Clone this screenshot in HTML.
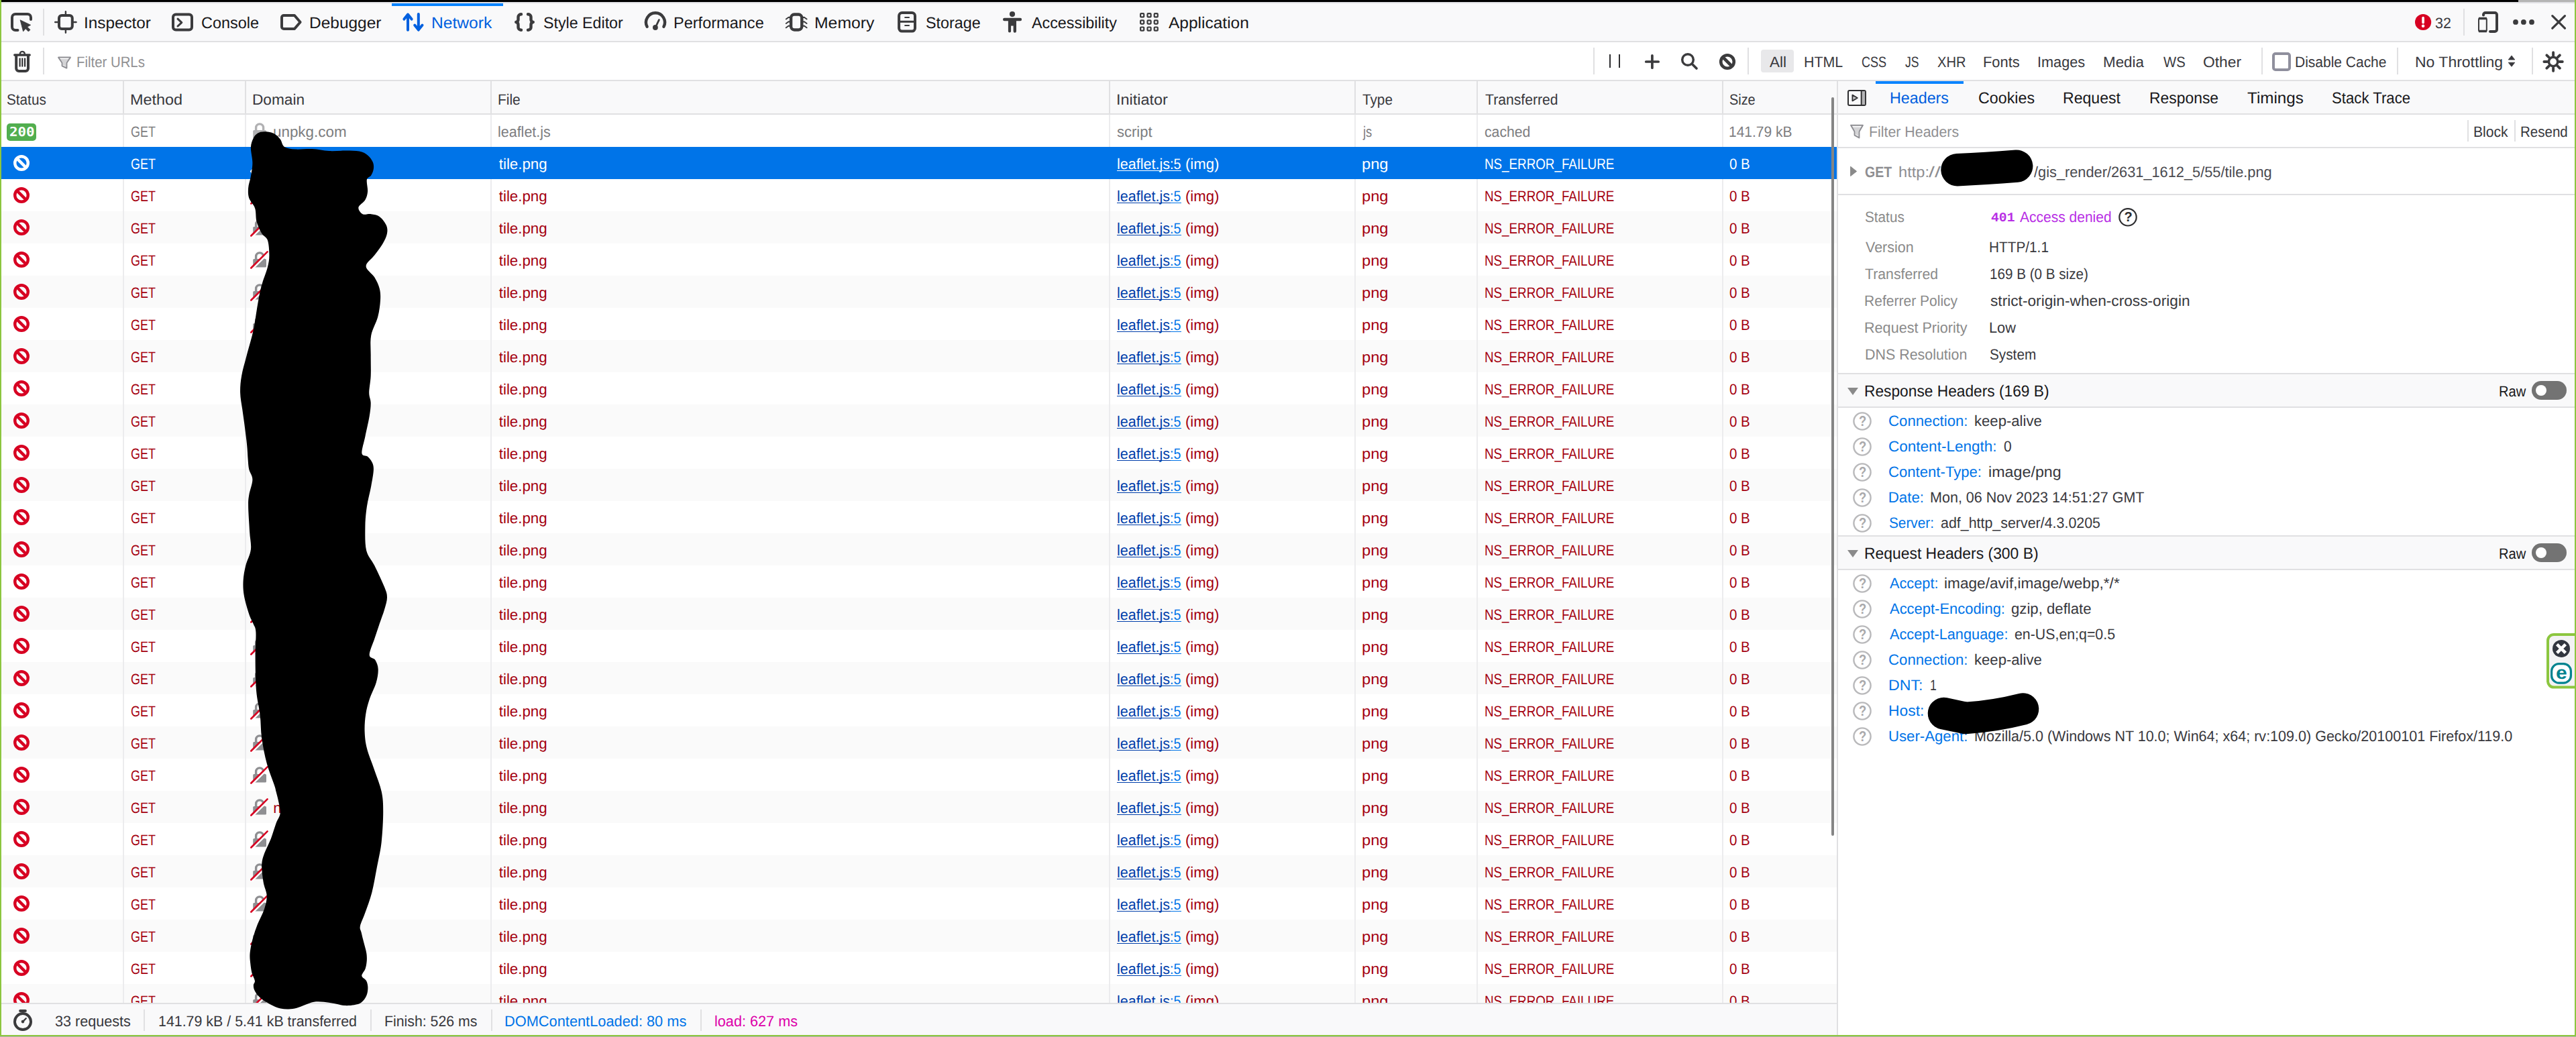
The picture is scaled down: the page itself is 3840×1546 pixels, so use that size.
<!DOCTYPE html>
<html lang="en"><head><meta charset="utf-8"><title>Network</title>
<style>
html,body{margin:0;padding:0}
body{width:3840px;height:1546px;position:relative;overflow:hidden;background:#fff;font-family:"Liberation Sans", sans-serif;}
.b{position:absolute;display:block}
.t{position:absolute;white-space:pre;line-height:1;transform-origin:0 0;text-rendering:geometricPrecision;}

</style></head><body>
<div class="b" style="left:0px;top:0px;width:3754px;height:3px;background:#000;"></div>
<div class="b" style="left:3754px;top:0px;width:86px;height:3px;background:#b4b4b4;"></div>
<div class="b" style="left:0px;top:3px;width:3840px;height:2px;background:#e1e1e5;"></div>
<div class="b" style="left:0px;top:5px;width:3840px;height:56px;background:#f9f9fa;"></div>
<div class="b" style="left:0px;top:61px;width:3840px;height:2px;background:#e0e0e2;"></div>
<div class="b" style="left:0px;top:63px;width:3840px;height:56px;background:#fff;"></div>
<div class="b" style="left:0px;top:119px;width:3840px;height:2px;background:#e0e0e2;"></div>
<div class="b" style="left:0px;top:121px;width:2738px;height:48px;background:#f9f9fa;"></div>
<div class="b" style="left:0px;top:169px;width:2738px;height:2px;background:#e0e0e2;"></div>
<div class="b" style="left:0px;top:171px;width:2738px;height:48px;background:#fff;"></div>
<div class="b" style="left:0px;top:219px;width:2738px;height:48px;background:#0074e8;"></div>
<div class="b" style="left:0px;top:267px;width:2738px;height:48px;background:#fff;"></div>
<div class="b" style="left:0px;top:315px;width:2738px;height:48px;background:#fafafa;"></div>
<div class="b" style="left:0px;top:363px;width:2738px;height:48px;background:#fff;"></div>
<div class="b" style="left:0px;top:411px;width:2738px;height:48px;background:#fafafa;"></div>
<div class="b" style="left:0px;top:459px;width:2738px;height:48px;background:#fff;"></div>
<div class="b" style="left:0px;top:507px;width:2738px;height:48px;background:#fafafa;"></div>
<div class="b" style="left:0px;top:555px;width:2738px;height:48px;background:#fff;"></div>
<div class="b" style="left:0px;top:603px;width:2738px;height:48px;background:#fafafa;"></div>
<div class="b" style="left:0px;top:651px;width:2738px;height:48px;background:#fff;"></div>
<div class="b" style="left:0px;top:699px;width:2738px;height:48px;background:#fafafa;"></div>
<div class="b" style="left:0px;top:747px;width:2738px;height:48px;background:#fff;"></div>
<div class="b" style="left:0px;top:795px;width:2738px;height:48px;background:#fafafa;"></div>
<div class="b" style="left:0px;top:843px;width:2738px;height:48px;background:#fff;"></div>
<div class="b" style="left:0px;top:891px;width:2738px;height:48px;background:#fafafa;"></div>
<div class="b" style="left:0px;top:939px;width:2738px;height:48px;background:#fff;"></div>
<div class="b" style="left:0px;top:987px;width:2738px;height:48px;background:#fafafa;"></div>
<div class="b" style="left:0px;top:1035px;width:2738px;height:48px;background:#fff;"></div>
<div class="b" style="left:0px;top:1083px;width:2738px;height:48px;background:#fafafa;"></div>
<div class="b" style="left:0px;top:1131px;width:2738px;height:48px;background:#fff;"></div>
<div class="b" style="left:0px;top:1179px;width:2738px;height:48px;background:#fafafa;"></div>
<div class="b" style="left:0px;top:1227px;width:2738px;height:48px;background:#fff;"></div>
<div class="b" style="left:0px;top:1275px;width:2738px;height:48px;background:#fafafa;"></div>
<div class="b" style="left:0px;top:1323px;width:2738px;height:48px;background:#fff;"></div>
<div class="b" style="left:0px;top:1371px;width:2738px;height:48px;background:#fafafa;"></div>
<div class="b" style="left:0px;top:1419px;width:2738px;height:48px;background:#fff;"></div>
<div class="b" style="left:0px;top:1467px;width:2738px;height:48px;background:#fafafa;"></div>
<div class="b" style="left:183px;top:121px;width:2px;height:48px;background:#e0e0e2;"></div>
<div class="b" style="left:183px;top:171px;width:2px;height:48px;background:#ececee;"></div>
<div class="b" style="left:183px;top:267px;width:2px;height:1230px;background:#ececee;"></div>
<div class="b" style="left:365px;top:121px;width:2px;height:48px;background:#e0e0e2;"></div>
<div class="b" style="left:365px;top:171px;width:2px;height:48px;background:#ececee;"></div>
<div class="b" style="left:365px;top:267px;width:2px;height:1230px;background:#ececee;"></div>
<div class="b" style="left:731px;top:121px;width:2px;height:48px;background:#e0e0e2;"></div>
<div class="b" style="left:731px;top:171px;width:2px;height:48px;background:#ececee;"></div>
<div class="b" style="left:731px;top:267px;width:2px;height:1230px;background:#ececee;"></div>
<div class="b" style="left:1653px;top:121px;width:2px;height:48px;background:#e0e0e2;"></div>
<div class="b" style="left:1653px;top:171px;width:2px;height:48px;background:#ececee;"></div>
<div class="b" style="left:1653px;top:267px;width:2px;height:1230px;background:#ececee;"></div>
<div class="b" style="left:2019px;top:121px;width:2px;height:48px;background:#e0e0e2;"></div>
<div class="b" style="left:2019px;top:171px;width:2px;height:48px;background:#ececee;"></div>
<div class="b" style="left:2019px;top:267px;width:2px;height:1230px;background:#ececee;"></div>
<div class="b" style="left:2201px;top:121px;width:2px;height:48px;background:#e0e0e2;"></div>
<div class="b" style="left:2201px;top:171px;width:2px;height:48px;background:#ececee;"></div>
<div class="b" style="left:2201px;top:267px;width:2px;height:1230px;background:#ececee;"></div>
<div class="b" style="left:2567px;top:121px;width:2px;height:48px;background:#e0e0e2;"></div>
<div class="b" style="left:2567px;top:171px;width:2px;height:48px;background:#ececee;"></div>
<div class="b" style="left:2567px;top:267px;width:2px;height:1230px;background:#ececee;"></div>
<span class="t" style="left:125.10px;top:23.50px;font-size:23.7px;color:#18181a;transform:scaleX(1.0260);">Inspector</span>
<span class="t" style="left:299.90px;top:23.50px;font-size:23.7px;color:#18181a;transform:scaleX(0.9896);">Console</span>
<span class="t" style="left:460.59px;top:23.50px;font-size:23.7px;color:#18181a;transform:scaleX(1.0330);">Debugger</span>
<span class="t" style="left:643.08px;top:23.50px;font-size:23.7px;color:#0060df;transform:scaleX(1.0388);">Network</span>
<span class="t" style="left:810.27px;top:23.50px;font-size:23.7px;color:#18181a;transform:scaleX(0.9806);">Style Editor</span>
<span class="t" style="left:1004.16px;top:23.50px;font-size:23.7px;color:#18181a;transform:scaleX(0.9935);">Performance</span>
<span class="t" style="left:1213.57px;top:23.50px;font-size:23.7px;color:#18181a;transform:scaleX(1.0449);">Memory</span>
<span class="t" style="left:1379.77px;top:23.50px;font-size:23.7px;color:#18181a;transform:scaleX(0.9839);">Storage</span>
<span class="t" style="left:1537.50px;top:23.50px;font-size:23.7px;color:#18181a;transform:scaleX(0.9840);">Accessibility</span>
<span class="t" style="left:1742.00px;top:23.50px;font-size:23.7px;color:#18181a;transform:scaleX(1.0339);">Application</span>
<div class="b" style="left:584px;top:5px;width:166px;height:4px;background:#0a84ff;"></div>
<div class="b" style="left:64px;top:13px;width:2px;height:40px;background:#e0e0e2;"></div>
<span class="t" style="left:3630.33px;top:23.70px;font-size:22.3px;color:#38383d;transform:scaleX(0.9589);">32</span>
<div class="b" style="left:3672px;top:13px;width:2px;height:40px;background:#e0e0e2;"></div>
<div class="b" style="left:64px;top:71px;width:2px;height:40px;background:#e0e0e2;"></div>
<span class="t" style="left:114.01px;top:81.70px;font-size:22.3px;color:#909092;transform:scaleX(0.9136);">Filter URLs</span>
<div class="b" style="left:2375px;top:71px;width:2px;height:40px;background:#e0e0e2;"></div>
<div class="b" style="left:2605px;top:71px;width:2px;height:40px;background:#e0e0e2;"></div>
<div class="b" style="left:2625px;top:74px;width:49px;height:34px;background:#e8e8ea;border-radius:4px"></div>
<span class="t" style="left:2637.50px;top:81.70px;font-size:22.3px;color:#38383d;transform:scaleX(1.0080);">All</span>
<span class="t" style="left:2689.33px;top:81.70px;font-size:22.3px;color:#38383d;transform:scaleX(0.9588);">HTML</span>
<span class="t" style="left:2774.65px;top:81.70px;font-size:22.3px;color:#38383d;transform:scaleX(0.8092);">CSS</span>
<span class="t" style="left:2839.73px;top:81.70px;font-size:22.3px;color:#38383d;transform:scaleX(0.7882);">JS</span>
<span class="t" style="left:2887.69px;top:81.70px;font-size:22.3px;color:#38383d;transform:scaleX(0.9029);">XHR</span>
<span class="t" style="left:2955.99px;top:81.70px;font-size:22.3px;color:#38383d;transform:scaleX(0.9806);">Fonts</span>
<span class="t" style="left:3037.30px;top:81.70px;font-size:22.3px;color:#38383d;transform:scaleX(0.9733);">Images</span>
<span class="t" style="left:3134.95px;top:81.70px;font-size:22.3px;color:#38383d;transform:scaleX(1.0028);">Media</span>
<span class="t" style="left:3224.80px;top:81.70px;font-size:22.3px;color:#38383d;transform:scaleX(0.9090);">WS</span>
<span class="t" style="left:3284.43px;top:81.70px;font-size:22.3px;color:#38383d;transform:scaleX(1.0216);">Other</span>
<div class="b" style="left:3371px;top:71px;width:2px;height:40px;background:#e0e0e2;"></div>
<span class="t" style="left:3420.61px;top:81.70px;font-size:22.3px;color:#38383d;transform:scaleX(0.9411);">Disable Cache</span>
<div class="b" style="left:3573px;top:71px;width:2px;height:40px;background:#e0e0e2;"></div>
<span class="t" style="left:3600.20px;top:81.70px;font-size:22.3px;color:#38383d;transform:scaleX(1.0308);">No Throttling</span>
<div class="b" style="left:3774px;top:71px;width:2px;height:40px;background:#e0e0e2;"></div>
<span class="t" style="left:9.85px;top:137.70px;font-size:22.3px;color:#38383d;transform:scaleX(0.9300);">Status</span>
<span class="t" style="left:193.67px;top:137.70px;font-size:22.3px;color:#38383d;transform:scaleX(1.0506);">Method</span>
<span class="t" style="left:376.23px;top:137.70px;font-size:22.3px;color:#38383d;transform:scaleX(1.0156);">Domain</span>
<span class="t" style="left:742.11px;top:137.70px;font-size:22.3px;color:#38383d;transform:scaleX(0.9388);">File</span>
<span class="t" style="left:1663.92px;top:137.70px;font-size:22.3px;color:#38383d;transform:scaleX(1.0522);">Initiator</span>
<span class="t" style="left:2030.93px;top:137.70px;font-size:22.3px;color:#38383d;transform:scaleX(0.9290);">Type</span>
<span class="t" style="left:2213.67px;top:137.70px;font-size:22.3px;color:#38383d;transform:scaleX(0.9483);">Transferred</span>
<span class="t" style="left:2578.13px;top:137.70px;font-size:22.3px;color:#38383d;transform:scaleX(0.8916);">Size</span>
<div class="b" style="left:10px;top:184px;width:44px;height:26px;background:#51ae4f;border-radius:5px"></div>
<span class="t" style="left:13.77px;top:187.85px;font-size:19px;color:#fff;transform:scaleX(1.0964);font-weight:700;font-family:'DejaVu Sans Mono',monospace;">200</span>
<span class="t" style="left:194.66px;top:185.70px;font-size:22.3px;color:#7d7d7f;transform:scaleX(0.8049);">GET</span>
<span class="t" style="left:406.60px;top:185.70px;font-size:22.3px;color:#7d7d7f;transform:scaleX(1.0044);">unpkg.com</span>
<span class="t" style="left:742.41px;top:185.70px;font-size:22.3px;color:#7d7d7f;transform:scaleX(0.9628);">leaflet.js</span>
<span class="t" style="left:1665.41px;top:185.70px;font-size:22.3px;color:#7d7d7f;transform:scaleX(0.9857);">script</span>
<span class="t" style="left:2031.82px;top:185.70px;font-size:22.3px;color:#7d7d7f;transform:scaleX(0.8228);">js</span>
<span class="t" style="left:2213.34px;top:185.70px;font-size:22.3px;color:#7d7d7f;transform:scaleX(0.9505);">cached</span>
<span class="t" style="left:2577.44px;top:185.70px;font-size:22.3px;color:#7d7d7f;transform:scaleX(0.9404);">141.79 kB</span>
<span class="t" style="left:194.66px;top:233.70px;font-size:22.3px;color:#fff;transform:scaleX(0.8049);">GET</span>
<span class="t" style="left:743.75px;top:233.70px;font-size:22.3px;color:#fff;">tile.png</span>
<span class="t" style="left:1665.35px;top:233.70px;font-size:22.3px;color:#fff;transform:scaleX(0.9659);">leaflet.js</span>
<span class="t" style="left:1743.97px;top:233.70px;font-size:22.3px;color:#fff;transform:scaleX(0.8776);">:5</span>
<div class="b" style="left:1665px;top:254px;width:79.5px;height:1.4px;background:#fff;"></div>
<div class="b" style="left:1744.5px;top:254px;width:16.5px;height:1.4px;background:#fff;"></div>
<span class="t" style="left:1767.16px;top:233.70px;font-size:22.3px;color:#fff;transform:scaleX(0.9921);">(img)</span>
<span class="t" style="left:2029.77px;top:233.70px;font-size:22.3px;color:#fff;transform:scaleX(1.0633);">png</span>
<span class="t" style="left:2212.53px;top:233.70px;font-size:22.3px;color:#fff;transform:scaleX(0.8430);">NS_ERROR_FAILURE</span>
<span class="t" style="left:2578.11px;top:233.70px;font-size:22.3px;color:#fff;transform:scaleX(0.9187);">0 B</span>
<span class="t" style="left:194.66px;top:281.70px;font-size:22.3px;color:#a4000f;transform:scaleX(0.8049);">GET</span>
<span class="t" style="left:743.75px;top:281.70px;font-size:22.3px;color:#a4000f;">tile.png</span>
<span class="t" style="left:1665.35px;top:281.70px;font-size:22.3px;color:#003eaa;transform:scaleX(0.9659);">leaflet.js</span>
<span class="t" style="left:1743.97px;top:281.70px;font-size:22.3px;color:#0074e8;transform:scaleX(0.8776);">:5</span>
<div class="b" style="left:1665px;top:302px;width:79.5px;height:1.4px;background:#003eaa;"></div>
<div class="b" style="left:1744.5px;top:302px;width:16.5px;height:1.4px;background:#0074e8;"></div>
<span class="t" style="left:1767.16px;top:281.70px;font-size:22.3px;color:#a4000f;transform:scaleX(0.9921);">(img)</span>
<span class="t" style="left:2029.77px;top:281.70px;font-size:22.3px;color:#a4000f;transform:scaleX(1.0633);">png</span>
<span class="t" style="left:2212.53px;top:281.70px;font-size:22.3px;color:#a4000f;transform:scaleX(0.8430);">NS_ERROR_FAILURE</span>
<span class="t" style="left:2578.11px;top:281.70px;font-size:22.3px;color:#a4000f;transform:scaleX(0.9187);">0 B</span>
<span class="t" style="left:194.66px;top:329.70px;font-size:22.3px;color:#a4000f;transform:scaleX(0.8049);">GET</span>
<span class="t" style="left:743.75px;top:329.70px;font-size:22.3px;color:#a4000f;">tile.png</span>
<span class="t" style="left:1665.35px;top:329.70px;font-size:22.3px;color:#003eaa;transform:scaleX(0.9659);">leaflet.js</span>
<span class="t" style="left:1743.97px;top:329.70px;font-size:22.3px;color:#0074e8;transform:scaleX(0.8776);">:5</span>
<div class="b" style="left:1665px;top:350px;width:79.5px;height:1.4px;background:#003eaa;"></div>
<div class="b" style="left:1744.5px;top:350px;width:16.5px;height:1.4px;background:#0074e8;"></div>
<span class="t" style="left:1767.16px;top:329.70px;font-size:22.3px;color:#a4000f;transform:scaleX(0.9921);">(img)</span>
<span class="t" style="left:2029.77px;top:329.70px;font-size:22.3px;color:#a4000f;transform:scaleX(1.0633);">png</span>
<span class="t" style="left:2212.53px;top:329.70px;font-size:22.3px;color:#a4000f;transform:scaleX(0.8430);">NS_ERROR_FAILURE</span>
<span class="t" style="left:2578.11px;top:329.70px;font-size:22.3px;color:#a4000f;transform:scaleX(0.9187);">0 B</span>
<span class="t" style="left:194.66px;top:377.70px;font-size:22.3px;color:#a4000f;transform:scaleX(0.8049);">GET</span>
<span class="t" style="left:743.75px;top:377.70px;font-size:22.3px;color:#a4000f;">tile.png</span>
<span class="t" style="left:1665.35px;top:377.70px;font-size:22.3px;color:#003eaa;transform:scaleX(0.9659);">leaflet.js</span>
<span class="t" style="left:1743.97px;top:377.70px;font-size:22.3px;color:#0074e8;transform:scaleX(0.8776);">:5</span>
<div class="b" style="left:1665px;top:398px;width:79.5px;height:1.4px;background:#003eaa;"></div>
<div class="b" style="left:1744.5px;top:398px;width:16.5px;height:1.4px;background:#0074e8;"></div>
<span class="t" style="left:1767.16px;top:377.70px;font-size:22.3px;color:#a4000f;transform:scaleX(0.9921);">(img)</span>
<span class="t" style="left:2029.77px;top:377.70px;font-size:22.3px;color:#a4000f;transform:scaleX(1.0633);">png</span>
<span class="t" style="left:2212.53px;top:377.70px;font-size:22.3px;color:#a4000f;transform:scaleX(0.8430);">NS_ERROR_FAILURE</span>
<span class="t" style="left:2578.11px;top:377.70px;font-size:22.3px;color:#a4000f;transform:scaleX(0.9187);">0 B</span>
<span class="t" style="left:194.66px;top:425.70px;font-size:22.3px;color:#a4000f;transform:scaleX(0.8049);">GET</span>
<span class="t" style="left:743.75px;top:425.70px;font-size:22.3px;color:#a4000f;">tile.png</span>
<span class="t" style="left:1665.35px;top:425.70px;font-size:22.3px;color:#003eaa;transform:scaleX(0.9659);">leaflet.js</span>
<span class="t" style="left:1743.97px;top:425.70px;font-size:22.3px;color:#0074e8;transform:scaleX(0.8776);">:5</span>
<div class="b" style="left:1665px;top:446px;width:79.5px;height:1.4px;background:#003eaa;"></div>
<div class="b" style="left:1744.5px;top:446px;width:16.5px;height:1.4px;background:#0074e8;"></div>
<span class="t" style="left:1767.16px;top:425.70px;font-size:22.3px;color:#a4000f;transform:scaleX(0.9921);">(img)</span>
<span class="t" style="left:2029.77px;top:425.70px;font-size:22.3px;color:#a4000f;transform:scaleX(1.0633);">png</span>
<span class="t" style="left:2212.53px;top:425.70px;font-size:22.3px;color:#a4000f;transform:scaleX(0.8430);">NS_ERROR_FAILURE</span>
<span class="t" style="left:2578.11px;top:425.70px;font-size:22.3px;color:#a4000f;transform:scaleX(0.9187);">0 B</span>
<span class="t" style="left:194.66px;top:473.70px;font-size:22.3px;color:#a4000f;transform:scaleX(0.8049);">GET</span>
<span class="t" style="left:743.75px;top:473.70px;font-size:22.3px;color:#a4000f;">tile.png</span>
<span class="t" style="left:1665.35px;top:473.70px;font-size:22.3px;color:#003eaa;transform:scaleX(0.9659);">leaflet.js</span>
<span class="t" style="left:1743.97px;top:473.70px;font-size:22.3px;color:#0074e8;transform:scaleX(0.8776);">:5</span>
<div class="b" style="left:1665px;top:494px;width:79.5px;height:1.4px;background:#003eaa;"></div>
<div class="b" style="left:1744.5px;top:494px;width:16.5px;height:1.4px;background:#0074e8;"></div>
<span class="t" style="left:1767.16px;top:473.70px;font-size:22.3px;color:#a4000f;transform:scaleX(0.9921);">(img)</span>
<span class="t" style="left:2029.77px;top:473.70px;font-size:22.3px;color:#a4000f;transform:scaleX(1.0633);">png</span>
<span class="t" style="left:2212.53px;top:473.70px;font-size:22.3px;color:#a4000f;transform:scaleX(0.8430);">NS_ERROR_FAILURE</span>
<span class="t" style="left:2578.11px;top:473.70px;font-size:22.3px;color:#a4000f;transform:scaleX(0.9187);">0 B</span>
<span class="t" style="left:194.66px;top:521.70px;font-size:22.3px;color:#a4000f;transform:scaleX(0.8049);">GET</span>
<span class="t" style="left:743.75px;top:521.70px;font-size:22.3px;color:#a4000f;">tile.png</span>
<span class="t" style="left:1665.35px;top:521.70px;font-size:22.3px;color:#003eaa;transform:scaleX(0.9659);">leaflet.js</span>
<span class="t" style="left:1743.97px;top:521.70px;font-size:22.3px;color:#0074e8;transform:scaleX(0.8776);">:5</span>
<div class="b" style="left:1665px;top:542px;width:79.5px;height:1.4px;background:#003eaa;"></div>
<div class="b" style="left:1744.5px;top:542px;width:16.5px;height:1.4px;background:#0074e8;"></div>
<span class="t" style="left:1767.16px;top:521.70px;font-size:22.3px;color:#a4000f;transform:scaleX(0.9921);">(img)</span>
<span class="t" style="left:2029.77px;top:521.70px;font-size:22.3px;color:#a4000f;transform:scaleX(1.0633);">png</span>
<span class="t" style="left:2212.53px;top:521.70px;font-size:22.3px;color:#a4000f;transform:scaleX(0.8430);">NS_ERROR_FAILURE</span>
<span class="t" style="left:2578.11px;top:521.70px;font-size:22.3px;color:#a4000f;transform:scaleX(0.9187);">0 B</span>
<span class="t" style="left:194.66px;top:569.70px;font-size:22.3px;color:#a4000f;transform:scaleX(0.8049);">GET</span>
<span class="t" style="left:743.75px;top:569.70px;font-size:22.3px;color:#a4000f;">tile.png</span>
<span class="t" style="left:1665.35px;top:569.70px;font-size:22.3px;color:#003eaa;transform:scaleX(0.9659);">leaflet.js</span>
<span class="t" style="left:1743.97px;top:569.70px;font-size:22.3px;color:#0074e8;transform:scaleX(0.8776);">:5</span>
<div class="b" style="left:1665px;top:590px;width:79.5px;height:1.4px;background:#003eaa;"></div>
<div class="b" style="left:1744.5px;top:590px;width:16.5px;height:1.4px;background:#0074e8;"></div>
<span class="t" style="left:1767.16px;top:569.70px;font-size:22.3px;color:#a4000f;transform:scaleX(0.9921);">(img)</span>
<span class="t" style="left:2029.77px;top:569.70px;font-size:22.3px;color:#a4000f;transform:scaleX(1.0633);">png</span>
<span class="t" style="left:2212.53px;top:569.70px;font-size:22.3px;color:#a4000f;transform:scaleX(0.8430);">NS_ERROR_FAILURE</span>
<span class="t" style="left:2578.11px;top:569.70px;font-size:22.3px;color:#a4000f;transform:scaleX(0.9187);">0 B</span>
<span class="t" style="left:194.66px;top:617.70px;font-size:22.3px;color:#a4000f;transform:scaleX(0.8049);">GET</span>
<span class="t" style="left:743.75px;top:617.70px;font-size:22.3px;color:#a4000f;">tile.png</span>
<span class="t" style="left:1665.35px;top:617.70px;font-size:22.3px;color:#003eaa;transform:scaleX(0.9659);">leaflet.js</span>
<span class="t" style="left:1743.97px;top:617.70px;font-size:22.3px;color:#0074e8;transform:scaleX(0.8776);">:5</span>
<div class="b" style="left:1665px;top:638px;width:79.5px;height:1.4px;background:#003eaa;"></div>
<div class="b" style="left:1744.5px;top:638px;width:16.5px;height:1.4px;background:#0074e8;"></div>
<span class="t" style="left:1767.16px;top:617.70px;font-size:22.3px;color:#a4000f;transform:scaleX(0.9921);">(img)</span>
<span class="t" style="left:2029.77px;top:617.70px;font-size:22.3px;color:#a4000f;transform:scaleX(1.0633);">png</span>
<span class="t" style="left:2212.53px;top:617.70px;font-size:22.3px;color:#a4000f;transform:scaleX(0.8430);">NS_ERROR_FAILURE</span>
<span class="t" style="left:2578.11px;top:617.70px;font-size:22.3px;color:#a4000f;transform:scaleX(0.9187);">0 B</span>
<span class="t" style="left:194.66px;top:665.70px;font-size:22.3px;color:#a4000f;transform:scaleX(0.8049);">GET</span>
<span class="t" style="left:743.75px;top:665.70px;font-size:22.3px;color:#a4000f;">tile.png</span>
<span class="t" style="left:1665.35px;top:665.70px;font-size:22.3px;color:#003eaa;transform:scaleX(0.9659);">leaflet.js</span>
<span class="t" style="left:1743.97px;top:665.70px;font-size:22.3px;color:#0074e8;transform:scaleX(0.8776);">:5</span>
<div class="b" style="left:1665px;top:686px;width:79.5px;height:1.4px;background:#003eaa;"></div>
<div class="b" style="left:1744.5px;top:686px;width:16.5px;height:1.4px;background:#0074e8;"></div>
<span class="t" style="left:1767.16px;top:665.70px;font-size:22.3px;color:#a4000f;transform:scaleX(0.9921);">(img)</span>
<span class="t" style="left:2029.77px;top:665.70px;font-size:22.3px;color:#a4000f;transform:scaleX(1.0633);">png</span>
<span class="t" style="left:2212.53px;top:665.70px;font-size:22.3px;color:#a4000f;transform:scaleX(0.8430);">NS_ERROR_FAILURE</span>
<span class="t" style="left:2578.11px;top:665.70px;font-size:22.3px;color:#a4000f;transform:scaleX(0.9187);">0 B</span>
<span class="t" style="left:194.66px;top:713.70px;font-size:22.3px;color:#a4000f;transform:scaleX(0.8049);">GET</span>
<span class="t" style="left:743.75px;top:713.70px;font-size:22.3px;color:#a4000f;">tile.png</span>
<span class="t" style="left:1665.35px;top:713.70px;font-size:22.3px;color:#003eaa;transform:scaleX(0.9659);">leaflet.js</span>
<span class="t" style="left:1743.97px;top:713.70px;font-size:22.3px;color:#0074e8;transform:scaleX(0.8776);">:5</span>
<div class="b" style="left:1665px;top:734px;width:79.5px;height:1.4px;background:#003eaa;"></div>
<div class="b" style="left:1744.5px;top:734px;width:16.5px;height:1.4px;background:#0074e8;"></div>
<span class="t" style="left:1767.16px;top:713.70px;font-size:22.3px;color:#a4000f;transform:scaleX(0.9921);">(img)</span>
<span class="t" style="left:2029.77px;top:713.70px;font-size:22.3px;color:#a4000f;transform:scaleX(1.0633);">png</span>
<span class="t" style="left:2212.53px;top:713.70px;font-size:22.3px;color:#a4000f;transform:scaleX(0.8430);">NS_ERROR_FAILURE</span>
<span class="t" style="left:2578.11px;top:713.70px;font-size:22.3px;color:#a4000f;transform:scaleX(0.9187);">0 B</span>
<span class="t" style="left:194.66px;top:761.70px;font-size:22.3px;color:#a4000f;transform:scaleX(0.8049);">GET</span>
<span class="t" style="left:743.75px;top:761.70px;font-size:22.3px;color:#a4000f;">tile.png</span>
<span class="t" style="left:1665.35px;top:761.70px;font-size:22.3px;color:#003eaa;transform:scaleX(0.9659);">leaflet.js</span>
<span class="t" style="left:1743.97px;top:761.70px;font-size:22.3px;color:#0074e8;transform:scaleX(0.8776);">:5</span>
<div class="b" style="left:1665px;top:782px;width:79.5px;height:1.4px;background:#003eaa;"></div>
<div class="b" style="left:1744.5px;top:782px;width:16.5px;height:1.4px;background:#0074e8;"></div>
<span class="t" style="left:1767.16px;top:761.70px;font-size:22.3px;color:#a4000f;transform:scaleX(0.9921);">(img)</span>
<span class="t" style="left:2029.77px;top:761.70px;font-size:22.3px;color:#a4000f;transform:scaleX(1.0633);">png</span>
<span class="t" style="left:2212.53px;top:761.70px;font-size:22.3px;color:#a4000f;transform:scaleX(0.8430);">NS_ERROR_FAILURE</span>
<span class="t" style="left:2578.11px;top:761.70px;font-size:22.3px;color:#a4000f;transform:scaleX(0.9187);">0 B</span>
<span class="t" style="left:194.66px;top:809.70px;font-size:22.3px;color:#a4000f;transform:scaleX(0.8049);">GET</span>
<span class="t" style="left:743.75px;top:809.70px;font-size:22.3px;color:#a4000f;">tile.png</span>
<span class="t" style="left:1665.35px;top:809.70px;font-size:22.3px;color:#003eaa;transform:scaleX(0.9659);">leaflet.js</span>
<span class="t" style="left:1743.97px;top:809.70px;font-size:22.3px;color:#0074e8;transform:scaleX(0.8776);">:5</span>
<div class="b" style="left:1665px;top:830px;width:79.5px;height:1.4px;background:#003eaa;"></div>
<div class="b" style="left:1744.5px;top:830px;width:16.5px;height:1.4px;background:#0074e8;"></div>
<span class="t" style="left:1767.16px;top:809.70px;font-size:22.3px;color:#a4000f;transform:scaleX(0.9921);">(img)</span>
<span class="t" style="left:2029.77px;top:809.70px;font-size:22.3px;color:#a4000f;transform:scaleX(1.0633);">png</span>
<span class="t" style="left:2212.53px;top:809.70px;font-size:22.3px;color:#a4000f;transform:scaleX(0.8430);">NS_ERROR_FAILURE</span>
<span class="t" style="left:2578.11px;top:809.70px;font-size:22.3px;color:#a4000f;transform:scaleX(0.9187);">0 B</span>
<span class="t" style="left:194.66px;top:857.70px;font-size:22.3px;color:#a4000f;transform:scaleX(0.8049);">GET</span>
<span class="t" style="left:743.75px;top:857.70px;font-size:22.3px;color:#a4000f;">tile.png</span>
<span class="t" style="left:1665.35px;top:857.70px;font-size:22.3px;color:#003eaa;transform:scaleX(0.9659);">leaflet.js</span>
<span class="t" style="left:1743.97px;top:857.70px;font-size:22.3px;color:#0074e8;transform:scaleX(0.8776);">:5</span>
<div class="b" style="left:1665px;top:878px;width:79.5px;height:1.4px;background:#003eaa;"></div>
<div class="b" style="left:1744.5px;top:878px;width:16.5px;height:1.4px;background:#0074e8;"></div>
<span class="t" style="left:1767.16px;top:857.70px;font-size:22.3px;color:#a4000f;transform:scaleX(0.9921);">(img)</span>
<span class="t" style="left:2029.77px;top:857.70px;font-size:22.3px;color:#a4000f;transform:scaleX(1.0633);">png</span>
<span class="t" style="left:2212.53px;top:857.70px;font-size:22.3px;color:#a4000f;transform:scaleX(0.8430);">NS_ERROR_FAILURE</span>
<span class="t" style="left:2578.11px;top:857.70px;font-size:22.3px;color:#a4000f;transform:scaleX(0.9187);">0 B</span>
<span class="t" style="left:194.66px;top:905.70px;font-size:22.3px;color:#a4000f;transform:scaleX(0.8049);">GET</span>
<span class="t" style="left:743.75px;top:905.70px;font-size:22.3px;color:#a4000f;">tile.png</span>
<span class="t" style="left:1665.35px;top:905.70px;font-size:22.3px;color:#003eaa;transform:scaleX(0.9659);">leaflet.js</span>
<span class="t" style="left:1743.97px;top:905.70px;font-size:22.3px;color:#0074e8;transform:scaleX(0.8776);">:5</span>
<div class="b" style="left:1665px;top:926px;width:79.5px;height:1.4px;background:#003eaa;"></div>
<div class="b" style="left:1744.5px;top:926px;width:16.5px;height:1.4px;background:#0074e8;"></div>
<span class="t" style="left:1767.16px;top:905.70px;font-size:22.3px;color:#a4000f;transform:scaleX(0.9921);">(img)</span>
<span class="t" style="left:2029.77px;top:905.70px;font-size:22.3px;color:#a4000f;transform:scaleX(1.0633);">png</span>
<span class="t" style="left:2212.53px;top:905.70px;font-size:22.3px;color:#a4000f;transform:scaleX(0.8430);">NS_ERROR_FAILURE</span>
<span class="t" style="left:2578.11px;top:905.70px;font-size:22.3px;color:#a4000f;transform:scaleX(0.9187);">0 B</span>
<span class="t" style="left:194.66px;top:953.70px;font-size:22.3px;color:#a4000f;transform:scaleX(0.8049);">GET</span>
<span class="t" style="left:743.75px;top:953.70px;font-size:22.3px;color:#a4000f;">tile.png</span>
<span class="t" style="left:1665.35px;top:953.70px;font-size:22.3px;color:#003eaa;transform:scaleX(0.9659);">leaflet.js</span>
<span class="t" style="left:1743.97px;top:953.70px;font-size:22.3px;color:#0074e8;transform:scaleX(0.8776);">:5</span>
<div class="b" style="left:1665px;top:974px;width:79.5px;height:1.4px;background:#003eaa;"></div>
<div class="b" style="left:1744.5px;top:974px;width:16.5px;height:1.4px;background:#0074e8;"></div>
<span class="t" style="left:1767.16px;top:953.70px;font-size:22.3px;color:#a4000f;transform:scaleX(0.9921);">(img)</span>
<span class="t" style="left:2029.77px;top:953.70px;font-size:22.3px;color:#a4000f;transform:scaleX(1.0633);">png</span>
<span class="t" style="left:2212.53px;top:953.70px;font-size:22.3px;color:#a4000f;transform:scaleX(0.8430);">NS_ERROR_FAILURE</span>
<span class="t" style="left:2578.11px;top:953.70px;font-size:22.3px;color:#a4000f;transform:scaleX(0.9187);">0 B</span>
<span class="t" style="left:194.66px;top:1001.70px;font-size:22.3px;color:#a4000f;transform:scaleX(0.8049);">GET</span>
<span class="t" style="left:743.75px;top:1001.70px;font-size:22.3px;color:#a4000f;">tile.png</span>
<span class="t" style="left:1665.35px;top:1001.70px;font-size:22.3px;color:#003eaa;transform:scaleX(0.9659);">leaflet.js</span>
<span class="t" style="left:1743.97px;top:1001.70px;font-size:22.3px;color:#0074e8;transform:scaleX(0.8776);">:5</span>
<div class="b" style="left:1665px;top:1022px;width:79.5px;height:1.4px;background:#003eaa;"></div>
<div class="b" style="left:1744.5px;top:1022px;width:16.5px;height:1.4px;background:#0074e8;"></div>
<span class="t" style="left:1767.16px;top:1001.70px;font-size:22.3px;color:#a4000f;transform:scaleX(0.9921);">(img)</span>
<span class="t" style="left:2029.77px;top:1001.70px;font-size:22.3px;color:#a4000f;transform:scaleX(1.0633);">png</span>
<span class="t" style="left:2212.53px;top:1001.70px;font-size:22.3px;color:#a4000f;transform:scaleX(0.8430);">NS_ERROR_FAILURE</span>
<span class="t" style="left:2578.11px;top:1001.70px;font-size:22.3px;color:#a4000f;transform:scaleX(0.9187);">0 B</span>
<span class="t" style="left:194.66px;top:1049.70px;font-size:22.3px;color:#a4000f;transform:scaleX(0.8049);">GET</span>
<span class="t" style="left:743.75px;top:1049.70px;font-size:22.3px;color:#a4000f;">tile.png</span>
<span class="t" style="left:1665.35px;top:1049.70px;font-size:22.3px;color:#003eaa;transform:scaleX(0.9659);">leaflet.js</span>
<span class="t" style="left:1743.97px;top:1049.70px;font-size:22.3px;color:#0074e8;transform:scaleX(0.8776);">:5</span>
<div class="b" style="left:1665px;top:1070px;width:79.5px;height:1.4px;background:#003eaa;"></div>
<div class="b" style="left:1744.5px;top:1070px;width:16.5px;height:1.4px;background:#0074e8;"></div>
<span class="t" style="left:1767.16px;top:1049.70px;font-size:22.3px;color:#a4000f;transform:scaleX(0.9921);">(img)</span>
<span class="t" style="left:2029.77px;top:1049.70px;font-size:22.3px;color:#a4000f;transform:scaleX(1.0633);">png</span>
<span class="t" style="left:2212.53px;top:1049.70px;font-size:22.3px;color:#a4000f;transform:scaleX(0.8430);">NS_ERROR_FAILURE</span>
<span class="t" style="left:2578.11px;top:1049.70px;font-size:22.3px;color:#a4000f;transform:scaleX(0.9187);">0 B</span>
<span class="t" style="left:194.66px;top:1097.70px;font-size:22.3px;color:#a4000f;transform:scaleX(0.8049);">GET</span>
<span class="t" style="left:743.75px;top:1097.70px;font-size:22.3px;color:#a4000f;">tile.png</span>
<span class="t" style="left:1665.35px;top:1097.70px;font-size:22.3px;color:#003eaa;transform:scaleX(0.9659);">leaflet.js</span>
<span class="t" style="left:1743.97px;top:1097.70px;font-size:22.3px;color:#0074e8;transform:scaleX(0.8776);">:5</span>
<div class="b" style="left:1665px;top:1118px;width:79.5px;height:1.4px;background:#003eaa;"></div>
<div class="b" style="left:1744.5px;top:1118px;width:16.5px;height:1.4px;background:#0074e8;"></div>
<span class="t" style="left:1767.16px;top:1097.70px;font-size:22.3px;color:#a4000f;transform:scaleX(0.9921);">(img)</span>
<span class="t" style="left:2029.77px;top:1097.70px;font-size:22.3px;color:#a4000f;transform:scaleX(1.0633);">png</span>
<span class="t" style="left:2212.53px;top:1097.70px;font-size:22.3px;color:#a4000f;transform:scaleX(0.8430);">NS_ERROR_FAILURE</span>
<span class="t" style="left:2578.11px;top:1097.70px;font-size:22.3px;color:#a4000f;transform:scaleX(0.9187);">0 B</span>
<span class="t" style="left:194.66px;top:1145.70px;font-size:22.3px;color:#a4000f;transform:scaleX(0.8049);">GET</span>
<span class="t" style="left:743.75px;top:1145.70px;font-size:22.3px;color:#a4000f;">tile.png</span>
<span class="t" style="left:1665.35px;top:1145.70px;font-size:22.3px;color:#003eaa;transform:scaleX(0.9659);">leaflet.js</span>
<span class="t" style="left:1743.97px;top:1145.70px;font-size:22.3px;color:#0074e8;transform:scaleX(0.8776);">:5</span>
<div class="b" style="left:1665px;top:1166px;width:79.5px;height:1.4px;background:#003eaa;"></div>
<div class="b" style="left:1744.5px;top:1166px;width:16.5px;height:1.4px;background:#0074e8;"></div>
<span class="t" style="left:1767.16px;top:1145.70px;font-size:22.3px;color:#a4000f;transform:scaleX(0.9921);">(img)</span>
<span class="t" style="left:2029.77px;top:1145.70px;font-size:22.3px;color:#a4000f;transform:scaleX(1.0633);">png</span>
<span class="t" style="left:2212.53px;top:1145.70px;font-size:22.3px;color:#a4000f;transform:scaleX(0.8430);">NS_ERROR_FAILURE</span>
<span class="t" style="left:2578.11px;top:1145.70px;font-size:22.3px;color:#a4000f;transform:scaleX(0.9187);">0 B</span>
<span class="t" style="left:194.66px;top:1193.70px;font-size:22.3px;color:#a4000f;transform:scaleX(0.8049);">GET</span>
<span class="t" style="left:743.75px;top:1193.70px;font-size:22.3px;color:#a4000f;">tile.png</span>
<span class="t" style="left:407.31px;top:1193.70px;font-size:22.3px;color:#a4000f;">n</span>
<span class="t" style="left:1665.35px;top:1193.70px;font-size:22.3px;color:#003eaa;transform:scaleX(0.9659);">leaflet.js</span>
<span class="t" style="left:1743.97px;top:1193.70px;font-size:22.3px;color:#0074e8;transform:scaleX(0.8776);">:5</span>
<div class="b" style="left:1665px;top:1214px;width:79.5px;height:1.4px;background:#003eaa;"></div>
<div class="b" style="left:1744.5px;top:1214px;width:16.5px;height:1.4px;background:#0074e8;"></div>
<span class="t" style="left:1767.16px;top:1193.70px;font-size:22.3px;color:#a4000f;transform:scaleX(0.9921);">(img)</span>
<span class="t" style="left:2029.77px;top:1193.70px;font-size:22.3px;color:#a4000f;transform:scaleX(1.0633);">png</span>
<span class="t" style="left:2212.53px;top:1193.70px;font-size:22.3px;color:#a4000f;transform:scaleX(0.8430);">NS_ERROR_FAILURE</span>
<span class="t" style="left:2578.11px;top:1193.70px;font-size:22.3px;color:#a4000f;transform:scaleX(0.9187);">0 B</span>
<span class="t" style="left:194.66px;top:1241.70px;font-size:22.3px;color:#a4000f;transform:scaleX(0.8049);">GET</span>
<span class="t" style="left:743.75px;top:1241.70px;font-size:22.3px;color:#a4000f;">tile.png</span>
<span class="t" style="left:1665.35px;top:1241.70px;font-size:22.3px;color:#003eaa;transform:scaleX(0.9659);">leaflet.js</span>
<span class="t" style="left:1743.97px;top:1241.70px;font-size:22.3px;color:#0074e8;transform:scaleX(0.8776);">:5</span>
<div class="b" style="left:1665px;top:1262px;width:79.5px;height:1.4px;background:#003eaa;"></div>
<div class="b" style="left:1744.5px;top:1262px;width:16.5px;height:1.4px;background:#0074e8;"></div>
<span class="t" style="left:1767.16px;top:1241.70px;font-size:22.3px;color:#a4000f;transform:scaleX(0.9921);">(img)</span>
<span class="t" style="left:2029.77px;top:1241.70px;font-size:22.3px;color:#a4000f;transform:scaleX(1.0633);">png</span>
<span class="t" style="left:2212.53px;top:1241.70px;font-size:22.3px;color:#a4000f;transform:scaleX(0.8430);">NS_ERROR_FAILURE</span>
<span class="t" style="left:2578.11px;top:1241.70px;font-size:22.3px;color:#a4000f;transform:scaleX(0.9187);">0 B</span>
<span class="t" style="left:194.66px;top:1289.70px;font-size:22.3px;color:#a4000f;transform:scaleX(0.8049);">GET</span>
<span class="t" style="left:743.75px;top:1289.70px;font-size:22.3px;color:#a4000f;">tile.png</span>
<span class="t" style="left:1665.35px;top:1289.70px;font-size:22.3px;color:#003eaa;transform:scaleX(0.9659);">leaflet.js</span>
<span class="t" style="left:1743.97px;top:1289.70px;font-size:22.3px;color:#0074e8;transform:scaleX(0.8776);">:5</span>
<div class="b" style="left:1665px;top:1310px;width:79.5px;height:1.4px;background:#003eaa;"></div>
<div class="b" style="left:1744.5px;top:1310px;width:16.5px;height:1.4px;background:#0074e8;"></div>
<span class="t" style="left:1767.16px;top:1289.70px;font-size:22.3px;color:#a4000f;transform:scaleX(0.9921);">(img)</span>
<span class="t" style="left:2029.77px;top:1289.70px;font-size:22.3px;color:#a4000f;transform:scaleX(1.0633);">png</span>
<span class="t" style="left:2212.53px;top:1289.70px;font-size:22.3px;color:#a4000f;transform:scaleX(0.8430);">NS_ERROR_FAILURE</span>
<span class="t" style="left:2578.11px;top:1289.70px;font-size:22.3px;color:#a4000f;transform:scaleX(0.9187);">0 B</span>
<span class="t" style="left:194.66px;top:1337.70px;font-size:22.3px;color:#a4000f;transform:scaleX(0.8049);">GET</span>
<span class="t" style="left:743.75px;top:1337.70px;font-size:22.3px;color:#a4000f;">tile.png</span>
<span class="t" style="left:1665.35px;top:1337.70px;font-size:22.3px;color:#003eaa;transform:scaleX(0.9659);">leaflet.js</span>
<span class="t" style="left:1743.97px;top:1337.70px;font-size:22.3px;color:#0074e8;transform:scaleX(0.8776);">:5</span>
<div class="b" style="left:1665px;top:1358px;width:79.5px;height:1.4px;background:#003eaa;"></div>
<div class="b" style="left:1744.5px;top:1358px;width:16.5px;height:1.4px;background:#0074e8;"></div>
<span class="t" style="left:1767.16px;top:1337.70px;font-size:22.3px;color:#a4000f;transform:scaleX(0.9921);">(img)</span>
<span class="t" style="left:2029.77px;top:1337.70px;font-size:22.3px;color:#a4000f;transform:scaleX(1.0633);">png</span>
<span class="t" style="left:2212.53px;top:1337.70px;font-size:22.3px;color:#a4000f;transform:scaleX(0.8430);">NS_ERROR_FAILURE</span>
<span class="t" style="left:2578.11px;top:1337.70px;font-size:22.3px;color:#a4000f;transform:scaleX(0.9187);">0 B</span>
<span class="t" style="left:194.66px;top:1385.70px;font-size:22.3px;color:#a4000f;transform:scaleX(0.8049);">GET</span>
<span class="t" style="left:743.75px;top:1385.70px;font-size:22.3px;color:#a4000f;">tile.png</span>
<span class="t" style="left:1665.35px;top:1385.70px;font-size:22.3px;color:#003eaa;transform:scaleX(0.9659);">leaflet.js</span>
<span class="t" style="left:1743.97px;top:1385.70px;font-size:22.3px;color:#0074e8;transform:scaleX(0.8776);">:5</span>
<div class="b" style="left:1665px;top:1406px;width:79.5px;height:1.4px;background:#003eaa;"></div>
<div class="b" style="left:1744.5px;top:1406px;width:16.5px;height:1.4px;background:#0074e8;"></div>
<span class="t" style="left:1767.16px;top:1385.70px;font-size:22.3px;color:#a4000f;transform:scaleX(0.9921);">(img)</span>
<span class="t" style="left:2029.77px;top:1385.70px;font-size:22.3px;color:#a4000f;transform:scaleX(1.0633);">png</span>
<span class="t" style="left:2212.53px;top:1385.70px;font-size:22.3px;color:#a4000f;transform:scaleX(0.8430);">NS_ERROR_FAILURE</span>
<span class="t" style="left:2578.11px;top:1385.70px;font-size:22.3px;color:#a4000f;transform:scaleX(0.9187);">0 B</span>
<span class="t" style="left:194.66px;top:1433.70px;font-size:22.3px;color:#a4000f;transform:scaleX(0.8049);">GET</span>
<span class="t" style="left:743.75px;top:1433.70px;font-size:22.3px;color:#a4000f;">tile.png</span>
<span class="t" style="left:1665.35px;top:1433.70px;font-size:22.3px;color:#003eaa;transform:scaleX(0.9659);">leaflet.js</span>
<span class="t" style="left:1743.97px;top:1433.70px;font-size:22.3px;color:#0074e8;transform:scaleX(0.8776);">:5</span>
<div class="b" style="left:1665px;top:1454px;width:79.5px;height:1.4px;background:#003eaa;"></div>
<div class="b" style="left:1744.5px;top:1454px;width:16.5px;height:1.4px;background:#0074e8;"></div>
<span class="t" style="left:1767.16px;top:1433.70px;font-size:22.3px;color:#a4000f;transform:scaleX(0.9921);">(img)</span>
<span class="t" style="left:2029.77px;top:1433.70px;font-size:22.3px;color:#a4000f;transform:scaleX(1.0633);">png</span>
<span class="t" style="left:2212.53px;top:1433.70px;font-size:22.3px;color:#a4000f;transform:scaleX(0.8430);">NS_ERROR_FAILURE</span>
<span class="t" style="left:2578.11px;top:1433.70px;font-size:22.3px;color:#a4000f;transform:scaleX(0.9187);">0 B</span>
<span class="t" style="left:194.66px;top:1481.70px;font-size:22.3px;color:#a4000f;transform:scaleX(0.8049);">GET</span>
<span class="t" style="left:743.75px;top:1481.70px;font-size:22.3px;color:#a4000f;">tile.png</span>
<span class="t" style="left:1665.35px;top:1481.70px;font-size:22.3px;color:#003eaa;transform:scaleX(0.9659);">leaflet.js</span>
<span class="t" style="left:1743.97px;top:1481.70px;font-size:22.3px;color:#0074e8;transform:scaleX(0.8776);">:5</span>
<div class="b" style="left:1665px;top:1502px;width:79.5px;height:1.4px;background:#003eaa;"></div>
<div class="b" style="left:1744.5px;top:1502px;width:16.5px;height:1.4px;background:#0074e8;"></div>
<span class="t" style="left:1767.16px;top:1481.70px;font-size:22.3px;color:#a4000f;transform:scaleX(0.9921);">(img)</span>
<span class="t" style="left:2029.77px;top:1481.70px;font-size:22.3px;color:#a4000f;transform:scaleX(1.0633);">png</span>
<span class="t" style="left:2212.53px;top:1481.70px;font-size:22.3px;color:#a4000f;transform:scaleX(0.8430);">NS_ERROR_FAILURE</span>
<span class="t" style="left:2578.11px;top:1481.70px;font-size:22.3px;color:#a4000f;transform:scaleX(0.9187);">0 B</span>
<div class="b" style="left:0px;top:1495px;width:2738px;height:2px;background:#e0e0e2;"></div>
<div class="b" style="left:0px;top:1497px;width:2738px;height:46px;background:#f9f9fa;"></div>
<span class="t" style="left:81.83px;top:1511.70px;font-size:22.3px;color:#38383d;transform:scaleX(0.9684);">33 requests</span>
<div class="b" style="left:214px;top:1505px;width:2px;height:32px;background:#e0e0e2;"></div>
<span class="t" style="left:236.16px;top:1511.70px;font-size:22.3px;color:#38383d;transform:scaleX(0.9591);">141.79 kB / 5.41 kB transferred</span>
<div class="b" style="left:552px;top:1505px;width:2px;height:32px;background:#e0e0e2;"></div>
<span class="t" style="left:573.34px;top:1511.70px;font-size:22.3px;color:#38383d;transform:scaleX(0.9539);">Finish: 526 ms</span>
<div class="b" style="left:732px;top:1505px;width:2px;height:32px;background:#e0e0e2;"></div>
<span class="t" style="left:752.30px;top:1511.70px;font-size:22.3px;color:#0074e8;transform:scaleX(0.9774);">DOMContentLoaded: 80 ms</span>
<div class="b" style="left:1044px;top:1505px;width:2px;height:32px;background:#e0e0e2;"></div>
<span class="t" style="left:1064.65px;top:1511.70px;font-size:22.3px;color:#dd00a9;transform:scaleX(0.9714);">load: 627 ms</span>
<div class="b" style="left:2738px;top:121px;width:2px;height:1422px;background:#e0e0e2;"></div>
<div class="b" style="left:2730px;top:145px;width:4px;height:1101px;background:#858585;border-radius:2px"></div>
<div class="b" style="left:2740px;top:121px;width:1098px;height:48px;background:#f9f9fa;"></div>
<div class="b" style="left:2740px;top:169px;width:1098px;height:2px;background:#e0e0e2;"></div>
<div class="b" style="left:2796px;top:121px;width:131px;height:4px;background:#0a84ff;"></div>
<span class="t" style="left:2817.18px;top:135.50px;font-size:23.7px;color:#0060df;transform:scaleX(0.9829);">Headers</span>
<span class="t" style="left:2948.66px;top:135.50px;font-size:23.7px;color:#18181a;transform:scaleX(0.9818);">Cookies</span>
<span class="t" style="left:3074.90px;top:135.50px;font-size:23.7px;color:#18181a;transform:scaleX(0.9745);">Request</span>
<span class="t" style="left:3203.81px;top:135.50px;font-size:23.7px;color:#18181a;transform:scaleX(0.9662);">Response</span>
<span class="t" style="left:3349.62px;top:135.50px;font-size:23.7px;color:#18181a;transform:scaleX(1.0226);">Timings</span>
<span class="t" style="left:3476.31px;top:135.50px;font-size:23.7px;color:#18181a;transform:scaleX(0.9366);">Stack Trace</span>
<div class="b" style="left:2740px;top:171px;width:1098px;height:48px;background:#fff;"></div>
<div class="b" style="left:2740px;top:219px;width:1098px;height:2px;background:#e0e0e2;"></div>
<span class="t" style="left:2785.58px;top:185.70px;font-size:22.3px;color:#909092;transform:scaleX(0.9575);">Filter Headers</span>
<div class="b" style="left:3678px;top:179px;width:2px;height:32px;background:#e0e0e2;"></div>
<span class="t" style="left:3687.05px;top:185.70px;font-size:22.3px;color:#38383d;transform:scaleX(0.9466);">Block</span>
<div class="b" style="left:3748px;top:179px;width:2px;height:32px;background:#e0e0e2;"></div>
<span class="t" style="left:3757.40px;top:185.70px;font-size:22.3px;color:#38383d;transform:scaleX(0.9206);">Resend</span>
<div class="b" style="left:2740px;top:289px;width:1098px;height:2px;background:#e0e0e2;"></div>
<span class="t" style="left:2779.99px;top:245.70px;font-size:22.3px;color:#8e8e91;transform:scaleX(0.8756);font-weight:700;">GET</span>
<span class="t" style="left:2830.42px;top:245.70px;font-size:22.3px;color:#8e8e91;transform:scaleX(1.0604);">http:</span>
<span class="t" style="left:2875.00px;top:245.70px;font-size:22.3px;color:#8e8e91;transform:scaleX(1.4438);">//</span>
<span class="t" style="left:3032.00px;top:245.70px;font-size:22.3px;color:#4a4a4f;transform:scaleX(0.9764);">/gis_render/2631_1612_5/55/tile.png</span>
<span class="t" style="left:2779.85px;top:312.70px;font-size:22.3px;color:#8a8a8a;transform:scaleX(0.9300);">Status</span>
<span class="t" style="left:2780.50px;top:357.70px;font-size:22.3px;color:#8a8a8a;transform:scaleX(0.9641);">Version</span>
<span class="t" style="left:2965.38px;top:357.70px;font-size:22.3px;color:#38383d;transform:scaleX(0.9324);">HTTP/1.1</span>
<span class="t" style="left:2780.17px;top:397.70px;font-size:22.3px;color:#8a8a8a;transform:scaleX(0.9528);">Transferred</span>
<span class="t" style="left:2965.71px;top:397.70px;font-size:22.3px;color:#38383d;transform:scaleX(0.9257);">169 B (0 B size)</span>
<span class="t" style="left:2779.36px;top:437.70px;font-size:22.3px;color:#8a8a8a;transform:scaleX(0.9436);">Referrer Policy</span>
<span class="t" style="left:2966.65px;top:437.70px;font-size:22.3px;color:#38383d;transform:scaleX(1.0177);">strict-origin-when-cross-origin</span>
<span class="t" style="left:2779.31px;top:477.70px;font-size:22.3px;color:#8a8a8a;transform:scaleX(0.9688);">Request Priority</span>
<span class="t" style="left:2965.30px;top:477.70px;font-size:22.3px;color:#38383d;transform:scaleX(0.9762);">Low</span>
<span class="t" style="left:2779.83px;top:517.70px;font-size:22.3px;color:#8a8a8a;transform:scaleX(0.9605);">DNS Resolution</span>
<span class="t" style="left:2966.35px;top:517.70px;font-size:22.3px;color:#38383d;transform:scaleX(0.9311);">System</span>
<span class="t" style="left:2967.88px;top:315.60px;font-size:19.5px;color:#b82ee5;transform:scaleX(1.0129);font-weight:700;font-family:'Liberation Mono',monospace;">401</span>
<span class="t" style="left:3011.00px;top:312.70px;font-size:22.3px;color:#b82ee5;transform:scaleX(0.9424);">Access denied</span>
<div class="b" style="left:2740px;top:556px;width:1098px;height:2px;background:#e0e0e2;"></div>
<div class="b" style="left:2740px;top:558px;width:1098px;height:48px;background:#f9f9fa;"></div>
<div class="b" style="left:2740px;top:606px;width:1098px;height:2px;background:#e0e0e2;"></div>
<span class="t" style="left:2779.47px;top:572.50px;font-size:23.7px;color:#18181a;transform:scaleX(0.9600);">Response Headers (169 B)</span>
<span class="t" style="left:3724.93px;top:572.70px;font-size:22.3px;color:#18181a;transform:scaleX(0.9040);">Raw</span>
<div class="b" style="left:3774px;top:568px;width:52px;height:28px;background:#737373;border-radius:14px"></div>
<div class="b" style="left:3780px;top:574px;width:16px;height:16px;background:#fff;border-radius:8px"></div>
<svg class="b" style="left:2754px;top:578px" width="16" height="11" viewBox="0 0 16 11" ><path d="M0,0 H16 L8,11 Z" fill="#8a8a8a"/></svg>
<span class="t" style="left:2815.46px;top:616.70px;font-size:22.3px;color:#0074e8;transform:scaleX(0.9961);">Connection:</span>
<span class="t" style="left:2943.12px;top:616.70px;font-size:22.3px;color:#38383d;transform:scaleX(0.9915);">keep-alive</span>
<svg class="b" style="left:2762px;top:614px" width="28" height="28" viewBox="0 0 28 28" ><circle cx="14" cy="14" r="12.6" fill="none" stroke="#b9b9bb" stroke-width="2.4"/></svg>
<span class="t" style="left:2770.68px;top:617.60px;font-size:21.5px;color:#a9a9ab;transform:scaleX(0.8536);font-weight:700;">?</span>
<span class="t" style="left:2815.44px;top:654.70px;font-size:22.3px;color:#0074e8;transform:scaleX(1.0104);">Content-Length:</span>
<span class="t" style="left:2986.84px;top:654.70px;font-size:22.3px;color:#38383d;transform:scaleX(0.9417);">0</span>
<svg class="b" style="left:2762px;top:652px" width="28" height="28" viewBox="0 0 28 28" ><circle cx="14" cy="14" r="12.6" fill="none" stroke="#b9b9bb" stroke-width="2.4"/></svg>
<span class="t" style="left:2770.68px;top:655.60px;font-size:21.5px;color:#a9a9ab;transform:scaleX(0.8536);font-weight:700;">?</span>
<span class="t" style="left:2815.46px;top:692.70px;font-size:22.3px;color:#0074e8;transform:scaleX(0.9926);">Content-Type:</span>
<span class="t" style="left:2963.54px;top:692.70px;font-size:22.3px;color:#38383d;transform:scaleX(1.0444);">image/png</span>
<svg class="b" style="left:2762px;top:690px" width="28" height="28" viewBox="0 0 28 28" ><circle cx="14" cy="14" r="12.6" fill="none" stroke="#b9b9bb" stroke-width="2.4"/></svg>
<span class="t" style="left:2770.68px;top:693.60px;font-size:21.5px;color:#a9a9ab;transform:scaleX(0.8536);font-weight:700;">?</span>
<span class="t" style="left:2814.76px;top:730.70px;font-size:22.3px;color:#0074e8;">Date:</span>
<span class="t" style="left:2877.32px;top:730.70px;font-size:22.3px;color:#38383d;transform:scaleX(0.9655);">Mon, 06 Nov 2023 14:51:27 GMT</span>
<svg class="b" style="left:2762px;top:728px" width="28" height="28" viewBox="0 0 28 28" ><circle cx="14" cy="14" r="12.6" fill="none" stroke="#b9b9bb" stroke-width="2.4"/></svg>
<span class="t" style="left:2770.68px;top:731.60px;font-size:21.5px;color:#a9a9ab;transform:scaleX(0.8536);font-weight:700;">?</span>
<span class="t" style="left:2815.85px;top:768.70px;font-size:22.3px;color:#0074e8;transform:scaleX(0.9326);">Server:</span>
<span class="t" style="left:2892.83px;top:768.70px;font-size:22.3px;color:#38383d;transform:scaleX(0.9600);">adf_http_server/4.3.0205</span>
<svg class="b" style="left:2762px;top:766px" width="28" height="28" viewBox="0 0 28 28" ><circle cx="14" cy="14" r="12.6" fill="none" stroke="#b9b9bb" stroke-width="2.4"/></svg>
<span class="t" style="left:2770.68px;top:769.60px;font-size:21.5px;color:#a9a9ab;transform:scaleX(0.8536);font-weight:700;">?</span>
<div class="b" style="left:2740px;top:798px;width:1098px;height:2px;background:#e0e0e2;"></div>
<div class="b" style="left:2740px;top:800px;width:1098px;height:48px;background:#f9f9fa;"></div>
<div class="b" style="left:2740px;top:848px;width:1098px;height:2px;background:#e0e0e2;"></div>
<span class="t" style="left:2779.46px;top:814.50px;font-size:23.7px;color:#18181a;transform:scaleX(0.9664);">Request Headers (300 B)</span>
<span class="t" style="left:3724.93px;top:814.70px;font-size:22.3px;color:#18181a;transform:scaleX(0.9040);">Raw</span>
<div class="b" style="left:3774px;top:810px;width:52px;height:28px;background:#737373;border-radius:14px"></div>
<div class="b" style="left:3780px;top:816px;width:16px;height:16px;background:#fff;border-radius:8px"></div>
<svg class="b" style="left:2754px;top:820px" width="16" height="11" viewBox="0 0 16 11" ><path d="M0,0 H16 L8,11 Z" fill="#8a8a8a"/></svg>
<span class="t" style="left:2816.50px;top:858.70px;font-size:22.3px;color:#0074e8;transform:scaleX(0.9744);">Accept:</span>
<span class="t" style="left:2898.09px;top:858.70px;font-size:22.3px;color:#38383d;transform:scaleX(1.0152);">image/avif,image/webp,*/*</span>
<svg class="b" style="left:2762px;top:856px" width="28" height="28" viewBox="0 0 28 28" ><circle cx="14" cy="14" r="12.6" fill="none" stroke="#b9b9bb" stroke-width="2.4"/></svg>
<span class="t" style="left:2770.68px;top:859.60px;font-size:21.5px;color:#a9a9ab;transform:scaleX(0.8536);font-weight:700;">?</span>
<span class="t" style="left:2816.50px;top:896.70px;font-size:22.3px;color:#0074e8;transform:scaleX(0.9840);">Accept-Encoding:</span>
<span class="t" style="left:2998.31px;top:896.70px;font-size:22.3px;color:#38383d;transform:scaleX(0.9945);">gzip, deflate</span>
<svg class="b" style="left:2762px;top:894px" width="28" height="28" viewBox="0 0 28 28" ><circle cx="14" cy="14" r="12.6" fill="none" stroke="#b9b9bb" stroke-width="2.4"/></svg>
<span class="t" style="left:2770.68px;top:897.60px;font-size:21.5px;color:#a9a9ab;transform:scaleX(0.8536);font-weight:700;">?</span>
<span class="t" style="left:2816.50px;top:934.70px;font-size:22.3px;color:#0074e8;transform:scaleX(0.9749);">Accept-Language:</span>
<span class="t" style="left:3002.83px;top:934.70px;font-size:22.3px;color:#38383d;transform:scaleX(0.9567);">en-US,en;q=0.5</span>
<svg class="b" style="left:2762px;top:932px" width="28" height="28" viewBox="0 0 28 28" ><circle cx="14" cy="14" r="12.6" fill="none" stroke="#b9b9bb" stroke-width="2.4"/></svg>
<span class="t" style="left:2770.68px;top:935.60px;font-size:21.5px;color:#a9a9ab;transform:scaleX(0.8536);font-weight:700;">?</span>
<span class="t" style="left:2815.46px;top:972.70px;font-size:22.3px;color:#0074e8;transform:scaleX(0.9961);">Connection:</span>
<span class="t" style="left:2943.12px;top:972.70px;font-size:22.3px;color:#38383d;transform:scaleX(0.9915);">keep-alive</span>
<svg class="b" style="left:2762px;top:970px" width="28" height="28" viewBox="0 0 28 28" ><circle cx="14" cy="14" r="12.6" fill="none" stroke="#b9b9bb" stroke-width="2.4"/></svg>
<span class="t" style="left:2770.68px;top:973.60px;font-size:21.5px;color:#a9a9ab;transform:scaleX(0.8536);font-weight:700;">?</span>
<span class="t" style="left:2814.69px;top:1010.70px;font-size:22.3px;color:#0074e8;transform:scaleX(1.0372);">DNT:</span>
<span class="t" style="left:2876.90px;top:1010.70px;font-size:22.3px;color:#38383d;transform:scaleX(0.7917);">1</span>
<svg class="b" style="left:2762px;top:1008px" width="28" height="28" viewBox="0 0 28 28" ><circle cx="14" cy="14" r="12.6" fill="none" stroke="#b9b9bb" stroke-width="2.4"/></svg>
<span class="t" style="left:2770.68px;top:1011.60px;font-size:21.5px;color:#a9a9ab;transform:scaleX(0.8536);font-weight:700;">?</span>
<span class="t" style="left:2814.71px;top:1048.70px;font-size:22.3px;color:#0074e8;transform:scaleX(1.0250);">Host:</span>
<svg class="b" style="left:2762px;top:1046px" width="28" height="28" viewBox="0 0 28 28" ><circle cx="14" cy="14" r="12.6" fill="none" stroke="#b9b9bb" stroke-width="2.4"/></svg>
<span class="t" style="left:2770.68px;top:1049.60px;font-size:21.5px;color:#a9a9ab;transform:scaleX(0.8536);font-weight:700;">?</span>
<span class="t" style="left:2815.11px;top:1086.70px;font-size:22.3px;color:#0074e8;transform:scaleX(0.9950);">User-Agent:</span>
<span class="t" style="left:2942.82px;top:1086.70px;font-size:22.3px;color:#38383d;transform:scaleX(0.9656);">Mozilla/5.0 (Windows NT 10.0; Win64; x64; rv:109.0) Gecko/20100101 Firefox/119.0</span>
<svg class="b" style="left:2762px;top:1084px" width="28" height="28" viewBox="0 0 28 28" ><circle cx="14" cy="14" r="12.6" fill="none" stroke="#b9b9bb" stroke-width="2.4"/></svg>
<span class="t" style="left:2770.68px;top:1087.60px;font-size:21.5px;color:#a9a9ab;transform:scaleX(0.8536);font-weight:700;">?</span>
<svg class="b" style="left:14px;top:15px" width="38" height="36" viewBox="14 15 38 36"><path d="M26.5,45 H23 a5,5 0 0 1 -5,-5 V26 a5,5 0 0 1 5,-5 H41 a5,5 0 0 1 5,5 V29" fill="none" stroke="#3b3b3d" stroke-width="4" stroke-linecap="round" stroke-linejoin="round" /><path d="M30.1,29.8 L45.7,37.3 L40.7,40.1 L45,44.4 L42.4,47 L38.1,42.7 L34.6,46.9 Z" fill="#3b3b3d" stroke="#3b3b3d" stroke-width="0.8" stroke-linejoin="round"/></svg>
<svg class="b" style="left:80px;top:15px" width="36" height="36" viewBox="80 15 36 36"><rect x="88" y="23" width="19.8" height="20" rx="4" fill="none" stroke="#3b3b3d" stroke-width="4"/><path d="M97.9,17.2 V21 M97.9,45 V48.8 M82.2,33 H86 M109.8,33 H113.6" stroke="#3b3b3d" stroke-width="2.4" stroke-linecap="round"/></svg>
<svg class="b" style="left:254px;top:17px" width="36" height="32" viewBox="254 17 36 32"><rect x="258" y="21.5" width="28" height="23" rx="4" fill="none" stroke="#3b3b3d" stroke-width="4"/><path d="M265,28.2 L270.8,33.6 L265,39" fill="none" stroke="#3b3b3d" stroke-width="3" stroke-linecap="round" stroke-linejoin="round" /></svg>
<svg class="b" style="left:416px;top:19px" width="36" height="28" viewBox="416 19 36 28"><path d="M423,23 H439 L447.6,33 L439,43 H423 a3,3 0 0 1 -3,-3 V26 a3,3 0 0 1 3,-3 Z" fill="none" stroke="#3b3b3d" stroke-width="4" stroke-linecap="round" stroke-linejoin="round" /></svg>
<svg class="b" style="left:598px;top:17px" width="36" height="32" viewBox="598 17 36 32"><path d="M608,44.8 V21.6 M602.4,28.6 L608,21.5 L613.6,28.6" fill="none" stroke="#0060df" stroke-width="4" stroke-linecap="round" stroke-linejoin="round" /><path d="M623.8,21 V44.4 M618.2,37.6 L623.8,44.6 L629.5,37.6" fill="none" stroke="#0060df" stroke-width="4" stroke-linecap="round" stroke-linejoin="round" /></svg>
<svg class="b" style="left:764px;top:17px" width="36" height="32" viewBox="764 17 36 32"><path d="M777,21.3 H776.5 a4,4 0 0 0 -4,4 V29 q0,3.6 -3.3,4 q3.3,0.4 3.3,4 V40.7 a4,4 0 0 0 4,4 H777" fill="none" stroke="#3b3b3d" stroke-width="4.4" stroke-linecap="round" stroke-linejoin="round" /><path d="M787,21.3 H787.5 a4,4 0 0 1 4,4 V29 q0,3.6 3.3,4 q-3.3,0.4 -3.3,4 V40.7 a4,4 0 0 1 -4,4 H787" fill="none" stroke="#3b3b3d" stroke-width="4.4" stroke-linecap="round" stroke-linejoin="round" /></svg>
<svg class="b" style="left:958px;top:15px" width="38" height="34" viewBox="958 15 38 34"><path d="M964.6,39.8 A14,14 0 1 1 989.4,39.8" fill="none" stroke="#3b3b3d" stroke-width="4.4" stroke-linecap="round" stroke-linejoin="round" /><circle cx="976.9" cy="41" r="3.9" fill="#3b3b3d"/><path d="M977,41 L982.4,29.6" fill="none" stroke="#3b3b3d" stroke-width="2.8" stroke-linecap="round" stroke-linejoin="round" /></svg>
<svg class="b" style="left:1168px;top:17px" width="38" height="32" viewBox="1168 17 38 32"><rect x="1179.1" y="21.5" width="16.2" height="23" rx="5" fill="none" stroke="#3b3b3d" stroke-width="4.4"/><path d="M1171.8,28.5 L1175.6,25.7 L1177.5,25.9" fill="none" stroke="#3b3b3d" stroke-width="2" stroke-linecap="round" stroke-linejoin="round" /><path d="M1202.6,28.5 L1198.8,25.7 L1196.9,25.9" fill="none" stroke="#3b3b3d" stroke-width="2" stroke-linecap="round" stroke-linejoin="round" /><path d="M1171.8,35 L1175.6,32.2 L1177.5,32.4" fill="none" stroke="#3b3b3d" stroke-width="2" stroke-linecap="round" stroke-linejoin="round" /><path d="M1202.6,35 L1198.8,32.2 L1196.9,32.4" fill="none" stroke="#3b3b3d" stroke-width="2" stroke-linecap="round" stroke-linejoin="round" /><path d="M1171.8,41.3 L1175.6,38.5 L1177.5,38.699999999999996" fill="none" stroke="#3b3b3d" stroke-width="2" stroke-linecap="round" stroke-linejoin="round" /><path d="M1202.6,41.3 L1198.8,38.5 L1196.9,38.699999999999996" fill="none" stroke="#3b3b3d" stroke-width="2" stroke-linecap="round" stroke-linejoin="round" /></svg>
<svg class="b" style="left:1336px;top:15px" width="32" height="36" viewBox="1336 15 32 36"><rect x="1340.1" y="19" width="23.9" height="27.6" rx="4.5" fill="none" stroke="#3b3b3d" stroke-width="4"/><path d="M1341,32.3 H1363" stroke="#3b3b3d" stroke-width="3"/><path d="M1349.2,26 H1355 M1349.2,38 H1355" fill="none" stroke="#3b3b3d" stroke-width="2.2" stroke-linecap="round" stroke-linejoin="round" /></svg>
<svg class="b" style="left:1493px;top:15px" width="32" height="36" viewBox="1493 15 32 36"><circle cx="1509" cy="21.1" r="4.1" fill="#3b3b3d"/><path d="M1497.2,29 H1520.9" fill="none" stroke="#3b3b3d" stroke-width="4.4" stroke-linecap="round" stroke-linejoin="round" /><path d="M1502.9,29 H1515 V46.5 a2.2,2.2 0 0 1 -4.4,0 V38.6 H1507.1 V46.5 a2.1,2.1 0 0 1 -4.2,0 Z" fill="#3b3b3d"/></svg>
<svg class="b" style="left:1697px;top:17px" width="32" height="32" viewBox="1697 17 32 32"><rect x="1700.1" y="20.200000000000003" width="5.1" height="5.2" rx="1" fill="none" stroke="#3b3b3d" stroke-width="2.2"/><rect x="1700.1" y="30.400000000000002" width="5.1" height="5.2" rx="1" fill="none" stroke="#3b3b3d" stroke-width="2.2"/><rect x="1700.1" y="40.5" width="5.1" height="5.2" rx="1" fill="none" stroke="#3b3b3d" stroke-width="2.2"/><rect x="1710.5" y="20.200000000000003" width="5.1" height="5.2" rx="1" fill="none" stroke="#3b3b3d" stroke-width="2.2"/><rect x="1710.5" y="30.400000000000002" width="5.1" height="5.2" rx="1" fill="none" stroke="#3b3b3d" stroke-width="2.2"/><rect x="1710.5" y="40.5" width="5.1" height="5.2" rx="1" fill="none" stroke="#3b3b3d" stroke-width="2.2"/><rect x="1720.6999999999998" y="20.200000000000003" width="5.1" height="5.2" rx="1" fill="none" stroke="#3b3b3d" stroke-width="2.2"/><rect x="1720.6999999999998" y="30.400000000000002" width="5.1" height="5.2" rx="1" fill="none" stroke="#3b3b3d" stroke-width="2.2"/><rect x="1720.6999999999998" y="40.5" width="5.1" height="5.2" rx="1" fill="none" stroke="#3b3b3d" stroke-width="2.2"/></svg>
<svg class="b" style="left:3598px;top:19px" width="28" height="28" viewBox="3598 19 28 28"><circle cx="3612.1" cy="33" r="12.1" fill="#d70022"/><path d="M3612.1,26.6 V33.6" stroke="#fff" stroke-width="3.7" stroke-linecap="round"/><circle cx="3612.1" cy="38.7" r="2.3" fill="#fff"/></svg>
<svg class="b" style="left:3692px;top:15px" width="34" height="36" viewBox="3692 15 34 36"><path d="M3702,22.5 V22 a3,3 0 0 1 3,-3 H3719 a3,3 0 0 1 3,3 V44 a3,3 0 0 1 -3,3 H3712" fill="none" stroke="#3b3b3d" stroke-width="4" stroke-linecap="round" stroke-linejoin="round" stroke-linecap="butt"/><rect x="3695" y="27" width="11.8" height="20" rx="2" fill="none" stroke="#3b3b3d" stroke-width="2"/><path d="M3695,27.5 H3706.8 M3695,46.5 H3706.8" stroke="#3b3b3d" stroke-width="3.6"/></svg>
<svg class="b" style="left:3744px;top:27px" width="36" height="12" viewBox="3744 27 36 12"><circle cx="3750" cy="32.9" r="3.9" fill="#3b3b3d"/><circle cx="3761.9" cy="32.9" r="3.9" fill="#3b3b3d"/><circle cx="3774" cy="32.9" r="3.9" fill="#3b3b3d"/></svg>
<svg class="b" style="left:3800px;top:19px" width="28" height="28" viewBox="3800 19 28 28"><path d="M3804.8,23.6 L3823.4,42.2 M3823.4,23.6 L3804.8,42.2" fill="none" stroke="#3b3b3d" stroke-width="3.2" stroke-linecap="round" stroke-linejoin="round" /></svg>
<svg class="b" style="left:18px;top:73px" width="30" height="38" viewBox="18 73 30 38"><path d="M21.8,82 H44.2" fill="none" stroke="#3b3b3d" stroke-width="3.4" stroke-linecap="round" stroke-linejoin="round" /><path d="M29.8,80.4 a3.5,3.5 0 0 1 7,0" fill="none" stroke="#3b3b3d" stroke-width="2.4" stroke-linecap="round" stroke-linejoin="round" /><path d="M24.2,83 V102 a4,4 0 0 0 4,4 H38 a4,4 0 0 0 4,-4 V83" fill="none" stroke="#3b3b3d" stroke-width="4" stroke-linecap="round" stroke-linejoin="round" stroke-linecap="butt"/><path d="M29.6,86.6 V99.5 M33.3,86.6 V99.5 M37.1,86.6 V99.5" stroke="#2a2a2c" stroke-width="2.1"/></svg>
<svg class="b" style="left:84px;top:82px" width="24" height="24" viewBox="84 82 24 24"><path d="M89.6,87.9 H102.4 L98.0,93.5 V99.1 L94.0,97.1 V93.5 Z" fill="#d4d4d6"/><path d="M87.1,85.6 H104.9 L99.4,93.7 V101.5 L92.6,98.3 V93.7 Z" fill="none" stroke="#8e8e93" stroke-width="2" stroke-linecap="round" stroke-linejoin="round" /></svg>
<svg class="b" style="left:2756px;top:183px" width="24" height="26" viewBox="2756 183 24 26"><path d="M2761.6,189.4 H2774.4 L2770.0,196.0 V202.5 L2766.0,200.2 V196.0 Z" fill="#d4d4d6"/><path d="M2759.1,186.7 H2776.9 L2771.4,196.2 V205.4 L2764.6,201.6 V196.2 Z" fill="none" stroke="#8e8e93" stroke-width="2" stroke-linecap="round" stroke-linejoin="round" /></svg>
<div class="b" style="left:2399px;top:81px;width:2px;height:20px;background:#2e2e30;"></div>
<div class="b" style="left:2413px;top:81px;width:2px;height:20px;background:#2e2e30;"></div>
<svg class="b" style="left:2449px;top:78px" width="28" height="28" viewBox="2449 78 28 28"><path d="M2453.7,92 H2472.2 M2462.9,82.8 V101.2" fill="none" stroke="#3b3b3d" stroke-width="3.7" stroke-linecap="round" stroke-linejoin="round" /></svg>
<svg class="b" style="left:2504px;top:76px" width="30" height="30" viewBox="2504 76 30 30"><circle cx="2516" cy="89" r="8.3" fill="none" stroke="#3b3b3d" stroke-width="3.5"/><path d="M2522.2,95.2 L2529,102" fill="none" stroke="#3b3b3d" stroke-width="3.7" stroke-linecap="round" stroke-linejoin="round" /></svg>
<svg class="b" style="left:2561px;top:78px" width="28" height="28" viewBox="2561 78 28 28"><circle cx="2575" cy="92" r="9.8" fill="none" stroke="#3b3b3d" stroke-width="4.6"/><path d="M2568,85 L2582,99" stroke="#3b3b3d" stroke-width="4.6"/></svg>
<div class="b" style="left:3387px;top:78px;width:20px;height:20px;background:#fff;border:4px solid #8f8f9d;border-radius:5px"></div>
<svg class="b" style="left:3737px;top:81px" width="14" height="20" viewBox="3737 81 14 20"><path d="M3739.2,89 L3744,82.9 L3748.8,89 Z M3739.2,93.2 L3744,99.3 L3748.8,93.2 Z" fill="#38383d" stroke="#38383d" stroke-width="0.8" stroke-linejoin="round"/></svg>
<svg class="b" style="left:3788px;top:74px" width="36" height="36" viewBox="3788 74 36 36"><circle cx="3806.1" cy="92" r="6.7" fill="none" stroke="#3b3b3d" stroke-width="3.6"/><path d="M3815.10,92.00 L3819.80,92.00 M3812.46,98.36 L3815.79,101.69 M3806.10,101.00 L3806.10,105.70 M3799.74,98.36 L3796.41,101.69 M3797.10,92.00 L3792.40,92.00 M3799.74,85.64 L3796.41,82.31 M3806.10,83.00 L3806.10,78.30 M3812.46,85.64 L3815.79,82.31 " fill="none" stroke="#3b3b3d" stroke-width="3.9" stroke-linecap="round" stroke-linejoin="round" /></svg>
<svg class="b" style="left:2752px;top:132px" width="32" height="28" viewBox="2752 132 32 28"><rect x="2755" y="134.9" width="25.9" height="22" rx="2" fill="none" stroke="#2e2e30" stroke-width="2"/><rect x="2775.6" y="136" width="4.4" height="20" fill="#b5b5b7"/><path d="M2774.7,135 V157" stroke="#2e2e30" stroke-width="2"/><path d="M2761.4,141.6 L2768.8,146 L2761.4,150.4 Z" fill="#c4c4c6" stroke="#2e2e30" stroke-width="1.8" stroke-linejoin="round"/></svg>
<svg class="b" style="left:2756px;top:246px" width="14" height="20" viewBox="2756 246 14 20"><path d="M2758.6,248.3 L2767.6,255.4 L2758.6,262.5 Z" fill="#8a8a8a" stroke="#8a8a8a" stroke-width="1" stroke-linejoin="round"/></svg>
<svg class="b" style="left:3156px;top:308px" width="32" height="32" viewBox="3156 308 32 32"><circle cx="3172" cy="323.8" r="12.7" fill="none" stroke="#2e2e30" stroke-width="2.2"/></svg>
<span class="t" style="left:3166.38px;top:314.35px;font-size:20px;color:#2e2e30;font-weight:700;">?</span>
<svg class="b" style="left:0px;top:171px" width="420" height="1324" viewBox="0 171 420 1324"><circle cx="32" cy="243" r="9.8" fill="none" stroke="#fff" stroke-width="4.4"/><path d="M25.1,236.1 L38.9,249.9" stroke="#fff" stroke-width="4.4"/><rect x="377.2" y="241.9" width="19.8" height="12.6" rx="1.6" fill="#8f8f92"/><path d="M381.6,242.5 V238.4 a5.5,5.5 0 0 1 11,0 V242.5" fill="none" stroke="#8f8f92" stroke-width="3.4"/><path d="M375.6,257.6 L401,232.6" stroke="#fff" stroke-width="2.6" stroke-linecap="round"/><path d="M374.3,255.5 L398.6,231.4" stroke="#fff" stroke-width="2.6" stroke-linecap="round"/><circle cx="32" cy="291" r="9.8" fill="none" stroke="#d70022" stroke-width="4.4"/><path d="M25.1,284.1 L38.9,297.9" stroke="#d70022" stroke-width="4.4"/><rect x="377.2" y="289.9" width="19.8" height="12.6" rx="1.6" fill="#8f8f92"/><path d="M381.6,290.5 V286.4 a5.5,5.5 0 0 1 11,0 V290.5" fill="none" stroke="#8f8f92" stroke-width="3.4"/><path d="M375.6,305.6 L401,280.6" stroke="#fff" stroke-width="2.6" stroke-linecap="round"/><path d="M374.3,303.5 L398.6,279.4" stroke="#d70022" stroke-width="2.6" stroke-linecap="round"/><circle cx="32" cy="339" r="9.8" fill="none" stroke="#d70022" stroke-width="4.4"/><path d="M25.1,332.1 L38.9,345.9" stroke="#d70022" stroke-width="4.4"/><rect x="377.2" y="337.9" width="19.8" height="12.6" rx="1.6" fill="#8f8f92"/><path d="M381.6,338.5 V334.4 a5.5,5.5 0 0 1 11,0 V338.5" fill="none" stroke="#8f8f92" stroke-width="3.4"/><path d="M375.6,353.6 L401,328.6" stroke="#fff" stroke-width="2.6" stroke-linecap="round"/><path d="M374.3,351.5 L398.6,327.4" stroke="#d70022" stroke-width="2.6" stroke-linecap="round"/><circle cx="32" cy="387" r="9.8" fill="none" stroke="#d70022" stroke-width="4.4"/><path d="M25.1,380.1 L38.9,393.9" stroke="#d70022" stroke-width="4.4"/><rect x="377.2" y="385.9" width="19.8" height="12.6" rx="1.6" fill="#8f8f92"/><path d="M381.6,386.5 V382.4 a5.5,5.5 0 0 1 11,0 V386.5" fill="none" stroke="#8f8f92" stroke-width="3.4"/><path d="M375.6,401.6 L401,376.6" stroke="#fff" stroke-width="2.6" stroke-linecap="round"/><path d="M374.3,399.5 L398.6,375.4" stroke="#d70022" stroke-width="2.6" stroke-linecap="round"/><circle cx="32" cy="435" r="9.8" fill="none" stroke="#d70022" stroke-width="4.4"/><path d="M25.1,428.1 L38.9,441.9" stroke="#d70022" stroke-width="4.4"/><rect x="377.2" y="433.9" width="19.8" height="12.6" rx="1.6" fill="#8f8f92"/><path d="M381.6,434.5 V430.4 a5.5,5.5 0 0 1 11,0 V434.5" fill="none" stroke="#8f8f92" stroke-width="3.4"/><path d="M375.6,449.6 L401,424.6" stroke="#fff" stroke-width="2.6" stroke-linecap="round"/><path d="M374.3,447.5 L398.6,423.4" stroke="#d70022" stroke-width="2.6" stroke-linecap="round"/><circle cx="32" cy="483" r="9.8" fill="none" stroke="#d70022" stroke-width="4.4"/><path d="M25.1,476.1 L38.9,489.9" stroke="#d70022" stroke-width="4.4"/><rect x="377.2" y="481.9" width="19.8" height="12.6" rx="1.6" fill="#8f8f92"/><path d="M381.6,482.5 V478.4 a5.5,5.5 0 0 1 11,0 V482.5" fill="none" stroke="#8f8f92" stroke-width="3.4"/><path d="M375.6,497.6 L401,472.6" stroke="#fff" stroke-width="2.6" stroke-linecap="round"/><path d="M374.3,495.5 L398.6,471.4" stroke="#d70022" stroke-width="2.6" stroke-linecap="round"/><circle cx="32" cy="531" r="9.8" fill="none" stroke="#d70022" stroke-width="4.4"/><path d="M25.1,524.1 L38.9,537.9" stroke="#d70022" stroke-width="4.4"/><rect x="377.2" y="529.9" width="19.8" height="12.6" rx="1.6" fill="#8f8f92"/><path d="M381.6,530.5 V526.4 a5.5,5.5 0 0 1 11,0 V530.5" fill="none" stroke="#8f8f92" stroke-width="3.4"/><path d="M375.6,545.6 L401,520.6" stroke="#fff" stroke-width="2.6" stroke-linecap="round"/><path d="M374.3,543.5 L398.6,519.4" stroke="#d70022" stroke-width="2.6" stroke-linecap="round"/><circle cx="32" cy="579" r="9.8" fill="none" stroke="#d70022" stroke-width="4.4"/><path d="M25.1,572.1 L38.9,585.9" stroke="#d70022" stroke-width="4.4"/><rect x="377.2" y="577.9" width="19.8" height="12.6" rx="1.6" fill="#8f8f92"/><path d="M381.6,578.5 V574.4 a5.5,5.5 0 0 1 11,0 V578.5" fill="none" stroke="#8f8f92" stroke-width="3.4"/><path d="M375.6,593.6 L401,568.6" stroke="#fff" stroke-width="2.6" stroke-linecap="round"/><path d="M374.3,591.5 L398.6,567.4" stroke="#d70022" stroke-width="2.6" stroke-linecap="round"/><circle cx="32" cy="627" r="9.8" fill="none" stroke="#d70022" stroke-width="4.4"/><path d="M25.1,620.1 L38.9,633.9" stroke="#d70022" stroke-width="4.4"/><rect x="377.2" y="625.9" width="19.8" height="12.6" rx="1.6" fill="#8f8f92"/><path d="M381.6,626.5 V622.4 a5.5,5.5 0 0 1 11,0 V626.5" fill="none" stroke="#8f8f92" stroke-width="3.4"/><path d="M375.6,641.6 L401,616.6" stroke="#fff" stroke-width="2.6" stroke-linecap="round"/><path d="M374.3,639.5 L398.6,615.4" stroke="#d70022" stroke-width="2.6" stroke-linecap="round"/><circle cx="32" cy="675" r="9.8" fill="none" stroke="#d70022" stroke-width="4.4"/><path d="M25.1,668.1 L38.9,681.9" stroke="#d70022" stroke-width="4.4"/><rect x="377.2" y="673.9" width="19.8" height="12.6" rx="1.6" fill="#8f8f92"/><path d="M381.6,674.5 V670.4 a5.5,5.5 0 0 1 11,0 V674.5" fill="none" stroke="#8f8f92" stroke-width="3.4"/><path d="M375.6,689.6 L401,664.6" stroke="#fff" stroke-width="2.6" stroke-linecap="round"/><path d="M374.3,687.5 L398.6,663.4" stroke="#d70022" stroke-width="2.6" stroke-linecap="round"/><circle cx="32" cy="723" r="9.8" fill="none" stroke="#d70022" stroke-width="4.4"/><path d="M25.1,716.1 L38.9,729.9" stroke="#d70022" stroke-width="4.4"/><rect x="377.2" y="721.9" width="19.8" height="12.6" rx="1.6" fill="#8f8f92"/><path d="M381.6,722.5 V718.4 a5.5,5.5 0 0 1 11,0 V722.5" fill="none" stroke="#8f8f92" stroke-width="3.4"/><path d="M375.6,737.6 L401,712.6" stroke="#fff" stroke-width="2.6" stroke-linecap="round"/><path d="M374.3,735.5 L398.6,711.4" stroke="#d70022" stroke-width="2.6" stroke-linecap="round"/><circle cx="32" cy="771" r="9.8" fill="none" stroke="#d70022" stroke-width="4.4"/><path d="M25.1,764.1 L38.9,777.9" stroke="#d70022" stroke-width="4.4"/><rect x="377.2" y="769.9" width="19.8" height="12.6" rx="1.6" fill="#8f8f92"/><path d="M381.6,770.5 V766.4 a5.5,5.5 0 0 1 11,0 V770.5" fill="none" stroke="#8f8f92" stroke-width="3.4"/><path d="M375.6,785.6 L401,760.6" stroke="#fff" stroke-width="2.6" stroke-linecap="round"/><path d="M374.3,783.5 L398.6,759.4" stroke="#d70022" stroke-width="2.6" stroke-linecap="round"/><circle cx="32" cy="819" r="9.8" fill="none" stroke="#d70022" stroke-width="4.4"/><path d="M25.1,812.1 L38.9,825.9" stroke="#d70022" stroke-width="4.4"/><rect x="377.2" y="817.9" width="19.8" height="12.6" rx="1.6" fill="#8f8f92"/><path d="M381.6,818.5 V814.4 a5.5,5.5 0 0 1 11,0 V818.5" fill="none" stroke="#8f8f92" stroke-width="3.4"/><path d="M375.6,833.6 L401,808.6" stroke="#fff" stroke-width="2.6" stroke-linecap="round"/><path d="M374.3,831.5 L398.6,807.4" stroke="#d70022" stroke-width="2.6" stroke-linecap="round"/><circle cx="32" cy="867" r="9.8" fill="none" stroke="#d70022" stroke-width="4.4"/><path d="M25.1,860.1 L38.9,873.9" stroke="#d70022" stroke-width="4.4"/><rect x="377.2" y="865.9" width="19.8" height="12.6" rx="1.6" fill="#8f8f92"/><path d="M381.6,866.5 V862.4 a5.5,5.5 0 0 1 11,0 V866.5" fill="none" stroke="#8f8f92" stroke-width="3.4"/><path d="M375.6,881.6 L401,856.6" stroke="#fff" stroke-width="2.6" stroke-linecap="round"/><path d="M374.3,879.5 L398.6,855.4" stroke="#d70022" stroke-width="2.6" stroke-linecap="round"/><circle cx="32" cy="915" r="9.8" fill="none" stroke="#d70022" stroke-width="4.4"/><path d="M25.1,908.1 L38.9,921.9" stroke="#d70022" stroke-width="4.4"/><rect x="377.2" y="913.9" width="19.8" height="12.6" rx="1.6" fill="#8f8f92"/><path d="M381.6,914.5 V910.4 a5.5,5.5 0 0 1 11,0 V914.5" fill="none" stroke="#8f8f92" stroke-width="3.4"/><path d="M375.6,929.6 L401,904.6" stroke="#fff" stroke-width="2.6" stroke-linecap="round"/><path d="M374.3,927.5 L398.6,903.4" stroke="#d70022" stroke-width="2.6" stroke-linecap="round"/><circle cx="32" cy="963" r="9.8" fill="none" stroke="#d70022" stroke-width="4.4"/><path d="M25.1,956.1 L38.9,969.9" stroke="#d70022" stroke-width="4.4"/><rect x="377.2" y="961.9" width="19.8" height="12.6" rx="1.6" fill="#8f8f92"/><path d="M381.6,962.5 V958.4 a5.5,5.5 0 0 1 11,0 V962.5" fill="none" stroke="#8f8f92" stroke-width="3.4"/><path d="M375.6,977.6 L401,952.6" stroke="#fff" stroke-width="2.6" stroke-linecap="round"/><path d="M374.3,975.5 L398.6,951.4" stroke="#d70022" stroke-width="2.6" stroke-linecap="round"/><circle cx="32" cy="1011" r="9.8" fill="none" stroke="#d70022" stroke-width="4.4"/><path d="M25.1,1004.1 L38.9,1017.9" stroke="#d70022" stroke-width="4.4"/><rect x="377.2" y="1009.9" width="19.8" height="12.6" rx="1.6" fill="#8f8f92"/><path d="M381.6,1010.5 V1006.4 a5.5,5.5 0 0 1 11,0 V1010.5" fill="none" stroke="#8f8f92" stroke-width="3.4"/><path d="M375.6,1025.6 L401,1000.6" stroke="#fff" stroke-width="2.6" stroke-linecap="round"/><path d="M374.3,1023.5 L398.6,999.4" stroke="#d70022" stroke-width="2.6" stroke-linecap="round"/><circle cx="32" cy="1059" r="9.8" fill="none" stroke="#d70022" stroke-width="4.4"/><path d="M25.1,1052.1 L38.9,1065.9" stroke="#d70022" stroke-width="4.4"/><rect x="377.2" y="1057.9" width="19.8" height="12.6" rx="1.6" fill="#8f8f92"/><path d="M381.6,1058.5 V1054.4 a5.5,5.5 0 0 1 11,0 V1058.5" fill="none" stroke="#8f8f92" stroke-width="3.4"/><path d="M375.6,1073.6 L401,1048.6" stroke="#fff" stroke-width="2.6" stroke-linecap="round"/><path d="M374.3,1071.5 L398.6,1047.4" stroke="#d70022" stroke-width="2.6" stroke-linecap="round"/><circle cx="32" cy="1107" r="9.8" fill="none" stroke="#d70022" stroke-width="4.4"/><path d="M25.1,1100.1 L38.9,1113.9" stroke="#d70022" stroke-width="4.4"/><rect x="377.2" y="1105.9" width="19.8" height="12.6" rx="1.6" fill="#8f8f92"/><path d="M381.6,1106.5 V1102.4 a5.5,5.5 0 0 1 11,0 V1106.5" fill="none" stroke="#8f8f92" stroke-width="3.4"/><path d="M375.6,1121.6 L401,1096.6" stroke="#fff" stroke-width="2.6" stroke-linecap="round"/><path d="M374.3,1119.5 L398.6,1095.4" stroke="#d70022" stroke-width="2.6" stroke-linecap="round"/><circle cx="32" cy="1155" r="9.8" fill="none" stroke="#d70022" stroke-width="4.4"/><path d="M25.1,1148.1 L38.9,1161.9" stroke="#d70022" stroke-width="4.4"/><rect x="377.2" y="1153.9" width="19.8" height="12.6" rx="1.6" fill="#8f8f92"/><path d="M381.6,1154.5 V1150.4 a5.5,5.5 0 0 1 11,0 V1154.5" fill="none" stroke="#8f8f92" stroke-width="3.4"/><path d="M375.6,1169.6 L401,1144.6" stroke="#fff" stroke-width="2.6" stroke-linecap="round"/><path d="M374.3,1167.5 L398.6,1143.4" stroke="#d70022" stroke-width="2.6" stroke-linecap="round"/><circle cx="32" cy="1203" r="9.8" fill="none" stroke="#d70022" stroke-width="4.4"/><path d="M25.1,1196.1 L38.9,1209.9" stroke="#d70022" stroke-width="4.4"/><rect x="377.2" y="1201.9" width="19.8" height="12.6" rx="1.6" fill="#8f8f92"/><path d="M381.6,1202.5 V1198.4 a5.5,5.5 0 0 1 11,0 V1202.5" fill="none" stroke="#8f8f92" stroke-width="3.4"/><path d="M375.6,1217.6 L401,1192.6" stroke="#fff" stroke-width="2.6" stroke-linecap="round"/><path d="M374.3,1215.5 L398.6,1191.4" stroke="#d70022" stroke-width="2.6" stroke-linecap="round"/><circle cx="32" cy="1251" r="9.8" fill="none" stroke="#d70022" stroke-width="4.4"/><path d="M25.1,1244.1 L38.9,1257.9" stroke="#d70022" stroke-width="4.4"/><rect x="377.2" y="1249.9" width="19.8" height="12.6" rx="1.6" fill="#8f8f92"/><path d="M381.6,1250.5 V1246.4 a5.5,5.5 0 0 1 11,0 V1250.5" fill="none" stroke="#8f8f92" stroke-width="3.4"/><path d="M375.6,1265.6 L401,1240.6" stroke="#fff" stroke-width="2.6" stroke-linecap="round"/><path d="M374.3,1263.5 L398.6,1239.4" stroke="#d70022" stroke-width="2.6" stroke-linecap="round"/><circle cx="32" cy="1299" r="9.8" fill="none" stroke="#d70022" stroke-width="4.4"/><path d="M25.1,1292.1 L38.9,1305.9" stroke="#d70022" stroke-width="4.4"/><rect x="377.2" y="1297.9" width="19.8" height="12.6" rx="1.6" fill="#8f8f92"/><path d="M381.6,1298.5 V1294.4 a5.5,5.5 0 0 1 11,0 V1298.5" fill="none" stroke="#8f8f92" stroke-width="3.4"/><path d="M375.6,1313.6 L401,1288.6" stroke="#fff" stroke-width="2.6" stroke-linecap="round"/><path d="M374.3,1311.5 L398.6,1287.4" stroke="#d70022" stroke-width="2.6" stroke-linecap="round"/><circle cx="32" cy="1347" r="9.8" fill="none" stroke="#d70022" stroke-width="4.4"/><path d="M25.1,1340.1 L38.9,1353.9" stroke="#d70022" stroke-width="4.4"/><rect x="377.2" y="1345.9" width="19.8" height="12.6" rx="1.6" fill="#8f8f92"/><path d="M381.6,1346.5 V1342.4 a5.5,5.5 0 0 1 11,0 V1346.5" fill="none" stroke="#8f8f92" stroke-width="3.4"/><path d="M375.6,1361.6 L401,1336.6" stroke="#fff" stroke-width="2.6" stroke-linecap="round"/><path d="M374.3,1359.5 L398.6,1335.4" stroke="#d70022" stroke-width="2.6" stroke-linecap="round"/><circle cx="32" cy="1395" r="9.8" fill="none" stroke="#d70022" stroke-width="4.4"/><path d="M25.1,1388.1 L38.9,1401.9" stroke="#d70022" stroke-width="4.4"/><rect x="377.2" y="1393.9" width="19.8" height="12.6" rx="1.6" fill="#8f8f92"/><path d="M381.6,1394.5 V1390.4 a5.5,5.5 0 0 1 11,0 V1394.5" fill="none" stroke="#8f8f92" stroke-width="3.4"/><path d="M375.6,1409.6 L401,1384.6" stroke="#fff" stroke-width="2.6" stroke-linecap="round"/><path d="M374.3,1407.5 L398.6,1383.4" stroke="#d70022" stroke-width="2.6" stroke-linecap="round"/><circle cx="32" cy="1443" r="9.8" fill="none" stroke="#d70022" stroke-width="4.4"/><path d="M25.1,1436.1 L38.9,1449.9" stroke="#d70022" stroke-width="4.4"/><rect x="377.2" y="1441.9" width="19.8" height="12.6" rx="1.6" fill="#8f8f92"/><path d="M381.6,1442.5 V1438.4 a5.5,5.5 0 0 1 11,0 V1442.5" fill="none" stroke="#8f8f92" stroke-width="3.4"/><path d="M375.6,1457.6 L401,1432.6" stroke="#fff" stroke-width="2.6" stroke-linecap="round"/><path d="M374.3,1455.5 L398.6,1431.4" stroke="#d70022" stroke-width="2.6" stroke-linecap="round"/><circle cx="32" cy="1491" r="9.8" fill="none" stroke="#d70022" stroke-width="4.4"/><path d="M25.1,1484.1 L38.9,1497.9" stroke="#d70022" stroke-width="4.4"/><rect x="377.2" y="1489.9" width="19.8" height="12.6" rx="1.6" fill="#8f8f92"/><path d="M381.6,1490.5 V1486.4 a5.5,5.5 0 0 1 11,0 V1490.5" fill="none" stroke="#8f8f92" stroke-width="3.4"/><path d="M375.6,1505.6 L401,1480.6" stroke="#fff" stroke-width="2.6" stroke-linecap="round"/><path d="M374.3,1503.5 L398.6,1479.4" stroke="#d70022" stroke-width="2.6" stroke-linecap="round"/><rect x="377.2" y="193.9" width="19.8" height="12.6" rx="1.6" fill="#b1b1b3"/><path d="M381.6,194.5 V190.4 a5.5,5.5 0 0 1 11,0 V194.5" fill="none" stroke="#b1b1b3" stroke-width="3.4"/></svg>
<svg class="b" style="left:18px;top:1503px" width="32" height="36" viewBox="18 1503 32 36"><circle cx="34" cy="1523.1" r="12" fill="none" stroke="#3b3b3d" stroke-width="4"/><path d="M30.1,1507 H37.9" fill="none" stroke="#3b3b3d" stroke-width="4" stroke-linecap="round" stroke-linejoin="round" /><circle cx="34" cy="1523.1" r="2.3" fill="#3b3b3d"/><path d="M34,1523.1 L38.8,1518.3" fill="none" stroke="#3b3b3d" stroke-width="2.3" stroke-linecap="round" stroke-linejoin="round" /></svg>
<svg class="b" style="left:350px;top:190px" width="240" height="1320" viewBox="350 190 240 1320"><path d="M377.6,206.3 C379.3,202.8 381.2,200.5 383.9,198.8 C386.6,197.1 389.9,196.3 393.9,196.3 C397.9,196.3 403.7,196.9 407.7,198.8 C411.7,200.7 415.0,204.2 417.7,207.6 C420.4,210.9 420.2,216.4 424.0,218.9 C427.8,221.4 433.4,222.1 440.3,222.6 C447.2,223.1 457.0,221.7 465.4,222.1 C473.8,222.5 482.1,224.7 490.5,225.1 C498.9,225.5 508.0,224.5 515.5,224.6 C523.0,224.7 530.2,224.5 535.6,225.6 C541.0,226.7 544.8,228.8 548.1,231.4 C551.5,234.0 554.2,238.1 555.7,241.4 C557.2,244.8 557.3,248.2 556.9,251.5 C556.5,254.8 554.9,258.8 553.2,261.5 C551.5,264.2 547.8,263.8 546.9,267.8 C546.0,271.8 548.5,280.3 548.1,285.3 C547.7,290.3 546.7,293.9 544.4,297.9 C542.1,301.9 535.0,305.6 534.4,309.1 C533.8,312.7 537.5,317.5 540.6,319.2 C543.7,320.9 549.0,318.6 553.2,319.2 C557.4,319.8 562.0,320.2 565.7,322.9 C569.5,325.6 573.8,331.3 575.7,335.5 C577.6,339.7 577.8,343.4 577.0,348.0 C576.2,352.6 573.8,357.7 570.7,363.1 C567.6,368.5 562.4,375.0 558.2,380.6 C554.0,386.2 545.6,391.5 545.6,396.9 C545.6,402.3 554.9,407.7 558.2,413.2 C561.6,418.7 564.2,424.3 565.7,430.0 C567.2,435.7 567.4,440.5 567.0,447.6 C566.6,454.7 565.5,463.8 563.2,472.6 C560.9,481.4 555.0,490.6 553.2,500.2 C551.5,509.8 552.8,520.3 552.7,530.3 C552.6,540.3 553.1,551.2 552.7,560.4 C552.3,569.6 550.2,578.8 550.2,585.5 C550.2,592.2 552.6,594.6 552.7,600.5 C552.8,606.4 552.1,612.2 550.7,620.6 C549.3,629.0 546.3,641.5 544.4,650.7 C542.5,659.9 538.8,670.8 539.4,675.8 C540.0,680.8 545.6,678.6 548.1,680.8 C550.6,683.0 552.9,685.6 554.4,688.8 C555.9,692.0 557.1,694.0 556.9,700.1 C556.7,706.2 554.9,715.9 553.2,725.1 C551.5,734.3 548.4,745.2 546.9,755.2 C545.4,765.2 544.5,774.4 544.4,785.3 C544.3,796.2 543.8,810.8 546.1,820.4 C548.4,830.0 553.7,833.8 558.2,843.0 C562.7,852.2 570.1,867.6 573.2,875.6 C576.3,883.6 577.0,885.3 577.0,890.7 C577.0,896.1 575.1,901.7 573.2,908.2 C571.3,914.8 568.2,922.6 565.7,930.0 C563.2,937.4 560.7,944.9 558.2,952.6 C555.7,960.3 550.5,971.2 550.7,976.4 C550.9,981.6 557.2,980.3 559.4,983.9 C561.6,987.5 563.5,992.1 563.7,997.7 C563.9,1003.4 562.9,1010.3 560.7,1017.8 C558.5,1025.3 553.3,1034.9 550.7,1042.8 C548.1,1050.7 546.3,1057.5 545.1,1065.4 C543.9,1073.4 543.3,1082.1 543.6,1090.5 C543.9,1098.9 544.5,1106.0 546.9,1115.6 C549.3,1125.2 554.6,1137.5 558.2,1148.2 C561.8,1158.9 566.5,1169.7 568.7,1180.0 C570.9,1190.3 571.2,1197.6 571.2,1210.1 C571.2,1222.6 570.2,1241.4 568.7,1255.2 C567.2,1269.0 564.3,1280.2 561.9,1292.8 C559.5,1305.3 557.3,1319.2 554.4,1330.5 C551.5,1341.8 547.3,1352.2 544.4,1360.6 C541.5,1368.9 537.9,1375.7 536.9,1380.6 C535.9,1385.5 537.7,1385.9 538.6,1390.0 C539.5,1394.1 541.0,1400.0 542.3,1405.0 C543.5,1410.0 545.4,1415.6 546.1,1420.1 C546.9,1424.6 547.0,1428.1 546.8,1432.1 C546.5,1436.1 545.9,1440.4 544.6,1444.2 C543.4,1448.0 539.0,1451.7 539.3,1454.7 C539.5,1457.7 544.6,1459.2 546.1,1462.2 C547.6,1465.2 548.4,1468.9 548.4,1472.7 C548.4,1476.5 547.7,1481.2 546.1,1484.8 C544.5,1488.4 541.6,1492.3 538.6,1494.6 C535.6,1496.8 532.3,1497.5 528.0,1498.3 C523.7,1499.0 518.0,1499.5 513.0,1499.1 C508.0,1498.7 503.0,1497.0 498.0,1496.1 C493.0,1495.2 487.9,1494.2 482.9,1493.8 C477.9,1493.4 472.7,1493.0 467.9,1493.8 C463.1,1494.5 458.6,1496.8 454.3,1498.3 C450.0,1499.8 446.3,1501.8 442.3,1502.8 C438.3,1503.8 434.3,1504.5 430.3,1504.6 C426.3,1504.7 422.2,1504.5 418.2,1503.6 C414.2,1502.7 410.2,1501.0 406.2,1499.1 C402.2,1497.2 397.7,1494.7 394.2,1492.3 C390.7,1489.9 387.6,1487.6 385.1,1484.8 C382.6,1482.0 380.3,1478.5 379.1,1475.7 C377.9,1472.9 377.8,1470.5 377.9,1468.2 C378.0,1466.0 380.3,1465.2 379.9,1462.2 C379.5,1459.2 376.5,1454.7 375.4,1450.2 C374.3,1445.7 373.6,1440.0 373.1,1435.1 C372.6,1430.2 372.1,1426.4 372.6,1420.7 C373.2,1415.0 374.5,1407.8 376.4,1400.7 C378.3,1393.6 381.0,1385.6 383.9,1378.1 C386.8,1370.6 391.6,1362.6 393.9,1355.5 C396.2,1348.4 397.9,1342.2 397.7,1335.5 C397.5,1328.8 393.9,1322.9 392.7,1315.4 C391.4,1307.9 390.0,1297.4 390.2,1290.3 C390.4,1283.2 391.6,1279.5 393.9,1272.8 C396.2,1266.1 401.0,1257.7 403.9,1250.2 C406.8,1242.7 409.2,1233.9 411.5,1227.6 C413.8,1221.3 417.1,1218.0 417.7,1212.6 C418.3,1207.2 416.2,1200.4 415.2,1195.0 C414.2,1189.6 412.5,1184.0 411.5,1180.0 C410.5,1176.0 411.3,1177.7 409.0,1170.7 C406.7,1163.7 400.8,1149.8 397.7,1138.1 C394.6,1126.4 391.9,1112.6 390.2,1100.5 C388.5,1088.4 389.0,1077.1 387.6,1065.4 C386.2,1053.7 383.3,1044.5 382.1,1030.3 C380.9,1016.1 380.7,994.8 380.6,980.2 C380.5,965.6 381.9,950.9 381.4,942.5 C380.9,934.1 379.3,934.5 377.6,930.0 C375.9,925.5 373.6,922.7 371.3,915.7 C369.0,908.7 365.2,896.5 363.8,888.1 C362.4,879.8 362.2,873.1 362.6,865.6 C363.0,858.1 364.4,850.7 366.3,843.0 C368.2,835.3 372.9,827.6 373.9,819.2 C374.9,810.8 372.7,803.5 372.1,792.8 C371.5,782.1 370.2,764.4 370.1,755.2 C370.0,746.0 370.2,744.4 371.3,737.7 C372.4,731.0 376.4,721.4 376.4,715.1 C376.4,708.8 372.4,705.1 371.3,700.1 C370.2,695.1 370.1,691.1 369.6,685.0 C369.1,678.9 368.9,671.0 368.1,663.2 C367.4,655.4 366.2,647.0 365.1,638.2 C364.0,629.4 362.5,619.4 361.3,610.6 C360.1,601.8 358.3,593.9 358.1,585.5 C357.9,577.1 358.5,569.6 360.1,560.4 C361.7,551.2 364.7,541.6 367.6,530.3 C370.5,519.0 374.9,505.2 377.6,492.7 C380.3,480.2 382.2,464.7 383.9,455.1 C385.6,445.5 386.4,440.7 387.6,435.0 C388.9,429.3 389.5,426.8 391.4,420.7 C393.3,414.6 397.2,404.9 398.9,398.2 C400.6,391.5 401.4,387.3 401.4,380.6 C401.4,373.9 400.8,363.5 398.9,358.1 C397.0,352.7 392.9,352.6 390.2,348.0 C387.5,343.4 384.3,336.8 382.6,330.5 C380.9,324.2 382.0,316.2 380.1,310.4 C378.2,304.5 373.0,300.4 371.3,295.4 C369.6,290.4 369.7,285.7 370.1,280.3 C370.5,274.9 372.8,269.1 373.9,262.8 C374.9,256.5 376.4,249.8 376.4,242.7 C376.4,235.6 373.7,226.2 373.9,220.1 C374.1,214.0 375.9,209.9 377.6,206.3 Z" fill="#000"/></svg>
<svg class="b" style="left:2885px;top:218px" width="150" height="66" viewBox="2885 218 150 66"><path d="M2917.5,253.2 Q2960,251.5 3006.2,247.7" fill="none" stroke="#000" stroke-width="48.4" stroke-linecap="round"/></svg>
<svg class="b" style="left:2868px;top:1028px" width="180" height="72" viewBox="2868 1028 180 72"><path d="M2897.5,1063.6 L2930,1070.5 Q2972,1068 3015.5,1057" fill="none" stroke="#000" stroke-width="47.6" stroke-linecap="round" stroke-linejoin="round"/></svg>
<svg class="b" style="left:3794px;top:942px" width="44" height="88" viewBox="3794 942 44 88"><rect x="3798" y="946" width="48" height="78.6" rx="9" fill="#f3f3f4" stroke="#8cc63f" stroke-width="4"/><circle cx="3818" cy="967" r="13" fill="#32363f"/><path d="M3811.6,960.6 L3824.4,973.4 M3824.4,960.6 L3811.6,973.4" stroke="#fff" stroke-width="4.6"/><rect x="3803.6" y="989.6" width="28.8" height="28.6" rx="11" fill="#fff" stroke="#00838f" stroke-width="3.2"/></svg>
<span class="t" style="left:3809.76px;top:989.85px;font-size:27px;color:#00838f;transform:scaleX(1.1111);font-weight:700;">e</span>
<div class="b" style="left:0px;top:0px;width:2px;height:1546px;background:#8cc63f;"></div>
<div class="b" style="left:3838px;top:0px;width:2px;height:1546px;background:#8cc63f;"></div>
<div class="b" style="left:0px;top:1543px;width:3840px;height:2px;background:#8cc63f;"></div>
<div class="b" style="left:0px;top:1545px;width:3840px;height:1px;background:#b4b4b4;"></div>
</body></html>
